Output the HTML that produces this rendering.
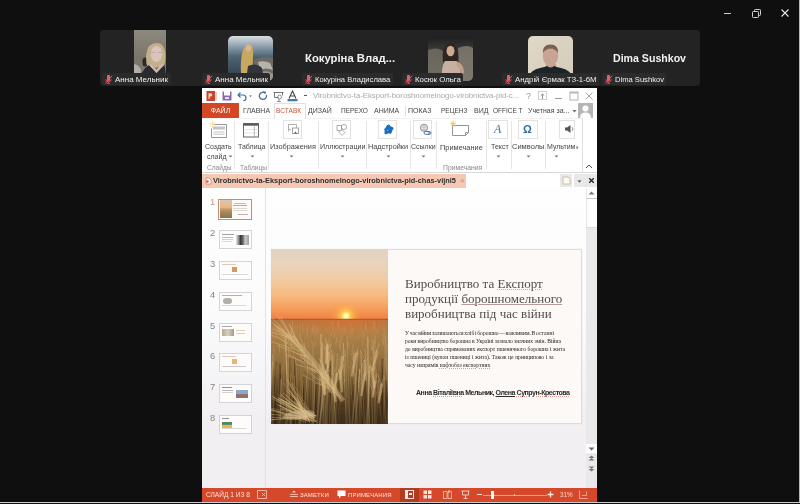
<!DOCTYPE html>
<html><head><meta charset="utf-8">
<style>
*{margin:0;padding:0;box-sizing:border-box}
html,body{width:800px;height:504px;overflow:hidden;background:#0f0f0f;font-family:"Liberation Sans",sans-serif}
.a{position:absolute}
div{will-change:transform}
#wc svg{position:absolute}
#bar{left:100px;top:30px;width:600px;height:56px;background:#232323;border-radius:4px}
.lbl{position:absolute;top:43px;height:12px;background:#2b2b2b;border-radius:2px;color:#f0f0f0;font-size:9px;line-height:12px;padding-left:13px;padding-right:2px;white-space:nowrap}
.mic{position:absolute;left:2px;top:2px;width:9px;height:9px}
.big{position:absolute;color:#f2f2f2;font-weight:bold;font-size:11.5px;white-space:nowrap}
.av{position:absolute;top:6px;width:45px;height:45px;border-radius:5px;overflow:hidden}
#ppt{left:202px;top:88px;width:395px;height:414px;background:#fff;overflow:hidden}
.t7{font-size:7px;color:#444;white-space:nowrap;position:absolute}
</style></head>
<body>
<!-- window controls -->
<div id="wc">
<svg class="a" style="left:720px;top:8px" width="14" height="12"><line x1="4" y1="5.5" x2="11" y2="5.5" stroke="#cfcfcf" stroke-width="1"/></svg>
<svg class="a" style="left:751px;top:8px" width="12" height="12"><rect x="1.5" y="3.5" width="6" height="6" rx=".8" fill="none" stroke="#d0d0d0"/><path d="M3.5 3.5V2.3a.8 .8 0 0 1 .8-.8h4.4a.8 .8 0 0 1 .8.8v4.4a.8 .8 0 0 1-.8.8H7.5" fill="none" stroke="#d0d0d0"/></svg>
<svg class="a" style="left:779px;top:7px" width="12" height="12"><path d="M2.5 2.5l7 7M9.5 2.5l-7 7" stroke="#e6e6e6" stroke-width="1.1"/></svg>
</div>
<div class="a" style="left:799px;top:0;width:1px;height:503px;background:#b4b6b8"></div>
<div class="a" style="left:0;top:502px;width:800px;height:1px;background:#c8ccd2"></div>

<!-- participants bar -->
<div id="bar" class="a"></div>

<div class="a" style="left:100px;top:30px;width:600px;height:56px">
 <!-- tile1 video -->
 <svg class="a" style="left:34px;top:0" width="32" height="55" viewBox="0 0 32 55">
  <defs><linearGradient id="v1" x1="0" y1="0" x2="0" y2="1"><stop offset="0" stop-color="#8e897f"/><stop offset=".5" stop-color="#7a746a"/><stop offset="1" stop-color="#85807a"/></linearGradient></defs>
  <rect width="32" height="55" fill="url(#v1)"/>
  <path d="M0 34 Q5 35 7 40 L5 55 H0z" fill="#c4c0b8" opacity=".75"/>
  <ellipse cx="11" cy="32" rx="2.6" ry="4.5" fill="#2e2a2a"/>
  <path d="M12.5 34 Q11 22 15 16 Q21 11 27 14 Q32 18 31.5 27 Q31.5 34 29 37 L15 38z" fill="#c2b08c"/>
  <ellipse cx="22.5" cy="24" rx="5.8" ry="8" fill="#d9c3bb"/>
  <path d="M16.5 22.5h4.5M24 22.5h4.5" stroke="#a89c9c" stroke-width=".6"/>
  <path d="M5 55 Q6 40 15 35 L22.5 43 L30 35 Q32 37 32 55z" fill="#2a2a30"/>
  <path d="M15 35 L22.5 43 L30 35 L27.5 34 L22.5 40 L17.5 34z" fill="#cfb8aa"/>
 </svg>
 <!-- tile2 avatar -->
 <svg class="a" style="left:128px;top:6px" width="45" height="45" viewBox="0 0 45 45">
  <defs><linearGradient id="v2" x1="0" y1="0" x2="0" y2="1"><stop offset="0" stop-color="#d8dee2"/><stop offset=".2" stop-color="#98a8b4"/><stop offset=".45" stop-color="#4e6676"/><stop offset="1" stop-color="#2a3844"/></linearGradient><clipPath id="c2"><rect width="45" height="45" rx="5"/></clipPath></defs>
  <g clip-path="url(#c2)">
  <rect width="45" height="45" fill="url(#v2)"/>
  <path d="M26 24 Q34 20 45 22 V45 H24z" fill="#6e6a64"/>
  <path d="M30 26 Q36 24 42 27 L45 34 Q38 31 32 34z" fill="#b8b4ac"/>
  <path d="M34 36 Q40 34 45 38 V45 H34z" fill="#9a968e"/>
  <path d="M13 38 Q12 24 15 14 Q18 7 22 8 Q26 10 25 20 Q25 30 24 38z" fill="#c8a860"/>
  <ellipse cx="20.5" cy="12" rx="2.6" ry="3.4" fill="#d8b890"/>
  <path d="M20 30 Q28 26 34 32 L36 45 H18z" fill="#30343c"/>
  <path d="M5 45 Q10 38 20 38 L24 45z" fill="#3e4046"/>
  </g>
 </svg>
 <!-- tile3 big name -->
 <div class="big" style="left:204.5px;top:22px;font-size:11.3px">Кокуріна Влад...</div>
 <!-- tile4 avatar -->
 <svg class="a" style="left:328px;top:6px" width="45" height="45" viewBox="0 0 45 45">
  <defs><linearGradient id="v4" x1="0" y1="0" x2="0" y2="1"><stop offset="0" stop-color="#1c1e1e"/><stop offset=".3" stop-color="#3a3a36"/><stop offset="1" stop-color="#5a564e"/></linearGradient><clipPath id="c4"><rect width="45" height="45" rx="5"/></clipPath></defs>
  <g clip-path="url(#c4)">
  <rect width="45" height="45" fill="url(#v4)"/>
  <path d="M0 14 Q10 10 16 16 L14 45 H0z" fill="#7e786c" opacity=".7"/>
  <path d="M30 12 Q40 8 45 12 V45 H32z" fill="#8a8478" opacity=".75"/>
  <path d="M15 26 Q13 10 22 7 Q31 8 30 24 L27 26z" fill="#2e2420"/>
  <ellipse cx="22.5" cy="15" rx="4" ry="5.2" fill="#d0aa90"/>
  <path d="M14 45 Q13 30 17 25 L28 25 Q33 28 33 45z" fill="#c8b0a0"/>
  <path d="M28 25 Q36 28 36 36 L34 40 Q32 32 29 30z" fill="#c4a088"/>
  </g>
 </svg>
 <!-- tile5 avatar -->
 <svg class="a" style="left:428px;top:6px" width="45" height="45" viewBox="0 0 45 45">
  <defs><linearGradient id="v5" x1="0" y1="0" x2="1" y2="1"><stop offset="0" stop-color="#e0d8c8"/><stop offset="1" stop-color="#d4ccba"/></linearGradient><clipPath id="c5"><rect width="45" height="45" rx="5"/></clipPath></defs>
  <g clip-path="url(#c5)">
  <rect width="45" height="45" fill="url(#v5)"/>
  <path d="M18 28 h10 v5 h-10z" fill="#c0a090"/>
  <ellipse cx="22.5" cy="19.5" rx="7.8" ry="10.5" fill="#c8a494"/>
  <path d="M14.8 17 Q14.5 8.5 22.5 8.5 Q30.5 8.5 30.2 17 Q27 12.5 22.5 12.5 Q18 12.5 14.8 17z" fill="#7a6050"/>
  <path d="M-1 45 Q1 34 12 32 Q17 31 19 30 Q22.5 33 26 30 Q28 31 33 32 Q44 34 46 45z" fill="#1e222a"/>
  </g>
 </svg>
 <!-- tile6 big name -->
 <div class="big" style="left:513px;top:22px;font-size:10.6px">Dima Sushkov</div>
</div>
<div class="lbl" style="left:102px;top:73px;width:69px"><svg class="mic" viewBox="0 0 9 9"><path d="M3 1.2a1.5 1.5 0 0 1 3 0v3.2a1.5 1.5 0 0 1-3 0z" fill="#e0606e"/><path d="M1.8 4.2a2.7 2.7 0 0 0 5.4 0M4.5 6.9v1.4M3 8.4h3" fill="none" stroke="#d8505e" stroke-width=".9"/><path d="M1.5 8.3L8 .8" stroke="#e86070" stroke-width="1"/></svg><span style="font-size:8px">Анна Мельник</span></div>
<div class="lbl" style="left:202px;top:73px;width:68px"><svg class="mic" viewBox="0 0 9 9"><path d="M3 1.2a1.5 1.5 0 0 1 3 0v3.2a1.5 1.5 0 0 1-3 0z" fill="#e0606e"/><path d="M1.8 4.2a2.7 2.7 0 0 0 5.4 0M4.5 6.9v1.4M3 8.4h3" fill="none" stroke="#d8505e" stroke-width=".9"/><path d="M1.5 8.3L8 .8" stroke="#e86070" stroke-width="1"/></svg><span style="font-size:8px">Анна Мельник</span></div>
<div class="lbl" style="left:302px;top:73px;width:91px"><svg class="mic" viewBox="0 0 9 9"><path d="M3 1.2a1.5 1.5 0 0 1 3 0v3.2a1.5 1.5 0 0 1-3 0z" fill="#e0606e"/><path d="M1.8 4.2a2.7 2.7 0 0 0 5.4 0M4.5 6.9v1.4M3 8.4h3" fill="none" stroke="#d8505e" stroke-width=".9"/><path d="M1.5 8.3L8 .8" stroke="#e86070" stroke-width="1"/></svg><span style="font-size:7.6px">Кокуріна Владислава</span></div>
<div class="lbl" style="left:402px;top:73px;width:61px"><svg class="mic" viewBox="0 0 9 9"><path d="M3 1.2a1.5 1.5 0 0 1 3 0v3.2a1.5 1.5 0 0 1-3 0z" fill="#e0606e"/><path d="M1.8 4.2a2.7 2.7 0 0 0 5.4 0M4.5 6.9v1.4M3 8.4h3" fill="none" stroke="#d8505e" stroke-width=".9"/><path d="M1.5 8.3L8 .8" stroke="#e86070" stroke-width="1"/></svg><span style="font-size:7.8px">Косюк Ольга</span></div>
<div class="lbl" style="left:502px;top:73px;width:97px"><svg class="mic" viewBox="0 0 9 9"><path d="M3 1.2a1.5 1.5 0 0 1 3 0v3.2a1.5 1.5 0 0 1-3 0z" fill="#e0606e"/><path d="M1.8 4.2a2.7 2.7 0 0 0 5.4 0M4.5 6.9v1.4M3 8.4h3" fill="none" stroke="#d8505e" stroke-width=".9"/><path d="M1.5 8.3L8 .8" stroke="#e86070" stroke-width="1"/></svg><span style="font-size:7.8px">Андрій Єрмак ТЗ-1-6М</span></div>
<div class="lbl" style="left:602px;top:73px;width:64px"><svg class="mic" viewBox="0 0 9 9"><path d="M3 1.2a1.5 1.5 0 0 1 3 0v3.2a1.5 1.5 0 0 1-3 0z" fill="#e0606e"/><path d="M1.8 4.2a2.7 2.7 0 0 0 5.4 0M4.5 6.9v1.4M3 8.4h3" fill="none" stroke="#d8505e" stroke-width=".9"/><path d="M1.5 8.3L8 .8" stroke="#e86070" stroke-width="1"/></svg><span style="font-size:7.6px">Dima Sushkov</span></div>


<!-- powerpoint -->
<div id="ppt" class="a">
 <!-- title bar -->
 <svg class="a" style="left:4px;top:3px" width="12" height="10" viewBox="0 0 12 10"><rect x="0.5" y="0" width="8.5" height="10" fill="#c9452a"/><rect x="9.5" y="1" width="1" height="8" fill="#b0a8a8"/><path d="M2.5 2.2h2.2a1.6 1.6 0 0 1 0 3.2H3.6V8H2.5z" fill="#f5e0c8"/></svg>
 <svg class="a" style="left:20px;top:3px" width="10" height="10" viewBox="0 0 10 10"><path d="M0.5 0.5h1.5v4h6v-4h1.5v9h-9z" fill="#8a6ab0"/><rect x="3" y="6" width="4" height="2" fill="#e8e0f0"/></svg>
 <svg class="a" style="left:35px;top:3px" width="16" height="10" viewBox="0 0 16 10"><path d="M3.5 1.5L1 4l2.5 2.5M1.2 4H6a3 3 0 0 1 0 6" fill="none" stroke="#3f6fa8" stroke-width="1.2"/><path d="M12 4.5h3l-1.5 1.5z" fill="#666"/></svg>
 <svg class="a" style="left:56px;top:3px" width="10" height="10" viewBox="0 0 10 10"><path d="M6.5 1.6A3.6 3.6 0 1 0 8.4 4" fill="none" stroke="#4a6a88" stroke-width="1.3"/><path d="M5 0.2l3.2.6-1 2.8z" fill="#4a6a88"/></svg>
 <svg class="a" style="left:71px;top:3px" width="11" height="11" viewBox="0 0 11 11"><path d="M0.5 1.5h10M1.5 1.5v5h4M9.5 1.5v3" fill="none" stroke="#666" stroke-width=".9"/><circle cx="6.5" cy="6" r="2" fill="none" stroke="#777" stroke-width=".8"/><path d="M4 10.5h4M6 8v2.5" stroke="#777" stroke-width=".8"/></svg>
 <svg class="a" style="left:85px;top:2px" width="11" height="12" viewBox="0 0 11 12"><path d="M2 8.5L5.5 1l3.5 7.5M3.5 6h4" fill="none" stroke="#444" stroke-width="1.1"/><rect x="0.5" y="9" width="10" height="2.3" fill="#4b78a8"/></svg>
 <div class="a" style="left:102px;top:7px;width:3px;height:1px;background:#555"></div>
 <div class="t7" style="left:111px;top:3px;font-size:7.75px;color:#a8a8a8;line-height:10px">Virobnictvo-ta-Eksport-boroshnomelnogo-virobnictva-pid-c...</div>
 <div class="t7" style="left:324px;top:2px;font-size:9px;color:#9a9a9a;line-height:12px">?</div>
 <svg class="a" style="left:336px;top:3px" width="10" height="10" viewBox="0 0 10 10"><rect x="0.5" y="0.5" width="8" height="8" fill="none" stroke="#c4c4c4" stroke-width=".8"/><path d="M4.5 8V3M2.8 4.6L4.5 3l1.7 1.6" fill="none" stroke="#8a8a8a" stroke-width=".9"/></svg>
 <div class="a" style="left:353px;top:10px;width:7px;height:1px;background:#9a9a9a"></div>
 <svg class="a" style="left:367px;top:3px" width="10" height="10" viewBox="0 0 10 10"><rect x="1" y="1" width="8" height="8" fill="none" stroke="#b4b4b4" stroke-width="1"/><rect x="1" y="1" width="8" height="1.5" fill="#b4b4b4"/></svg>
 <svg class="a" style="left:382px;top:3px" width="10" height="10" viewBox="0 0 10 10"><path d="M1.5 1.5l7 7M8.5 1.5l-7 7" stroke="#a4a4a4" stroke-width="1"/></svg>

 <!-- tabs -->
 <div class="a" style="left:0;top:15px;width:37px;height:15px;background:#d24726;color:#fff;font-size:7px;line-height:15px;text-align:center">ФАЙЛ</div>
 <div class="a" style="left:72px;top:15px;width:32px;height:16px;border:1px solid #e0e0e0;border-bottom:none;background:#fff;z-index:1"></div>
 <div class="t7" style="left:40.5px;top:19px;line-height:8px">ГЛАВНА</div>
 <div class="t7" style="left:74px;top:19px;line-height:8px;color:#c4583a;font-size:6.6px;z-index:2">ВСТАВК</div>
 <div class="t7" style="left:106px;top:19px;line-height:8px">ДИЗАЙ</div>
 <div class="t7" style="left:139px;top:19px;line-height:8px;font-size:6.5px">ПЕРЕХО</div>
 <div class="t7" style="left:171.5px;top:19px;line-height:8px">АНИМА</div>
 <div class="a" style="left:203px;top:18px;width:1px;height:10px;background:#e0e0e0"></div>
 <div class="t7" style="left:206px;top:19px;line-height:8px">ПОКАЗ</div>
 <div class="t7" style="left:239px;top:19px;line-height:8px;font-size:6.5px">РЕЦЕНЗ</div>
 <div class="t7" style="left:272px;top:19px;line-height:8px">ВИД</div>
 <div class="t7" style="left:291px;top:19px;line-height:8px;font-size:6.5px">OFFICE T</div>
 <div class="t7" style="left:326px;top:19px;line-height:8px">Учетная за...</div>
 <svg class="a" style="left:370px;top:21px" width="5" height="4"><path d="M0.5 1h4L2.5 3.5z" fill="#666"/></svg>
 <svg class="a" style="left:376px;top:15px" width="15" height="15" viewBox="0 0 15 15"><rect width="15" height="15" fill="#b5b5b5"/><circle cx="7.5" cy="5.5" r="3" fill="#fff"/><path d="M2 15 Q2 9.5 7.5 9.5 Q13 9.5 13 15z" fill="#fff"/></svg>

 <!-- ribbon -->
 <div class="a" style="left:0;top:30px;width:380px;height:1px;background:#f2f2f2"></div>
 <div class="a" style="left:0;top:84px;width:395px;height:1px;background:#d8d8d8"></div>
 <svg class="a" style="left:5.5px;top:31px" width="20" height="19" viewBox="0 0 20 19"><path d="M6 5.5h12.5v13h-15v-9" fill="#fff" stroke="#8a8a8a" stroke-width=".9"/><rect x="5" y="7.5" width="12" height="3" fill="#c4c4c4"/><path d="M5.5 13h11M5.5 15.2h11" stroke="#9a9a9a" stroke-width=".6"/><path d="M4.5 1v8M0.5 5h8M1.7 2.2l5.6 5.6M7.3 2.2l-5.6 5.6" stroke="#f2d890" stroke-width=".6"/></svg><div class="t7" style="left:3px;top:55px;font-size:7px;color:#444;line-height:8px">Создать</div><div class="t7" style="left:4.5px;top:65px;font-size:7px;color:#444;line-height:8px">слайд</div><svg class="a" style="left:25.5px;top:67px" width="5" height="3"><path d="M0.5 0.5h4L2.5 2.5z" fill="#777"/></svg><div class="t7" style="left:5px;top:76px;font-size:6.6px;color:#8a8a8a;line-height:8px">Слайды</div><div class="a" style="left:32px;top:33px;width:1px;height:48px;background:#e6e6e6"></div><svg class="a" style="left:38px;top:34px" width="19" height="16" viewBox="0 0 19 16"><rect x="3.5" y="1.5" width="15" height="13.5" fill="#fff" stroke="#666" stroke-width="1"/><rect x="3.5" y="1.5" width="15" height="2.2" fill="#5a5a5a"/><path d="M3.5 7.5h15M3.5 11h15" stroke="#d4d4d4" stroke-width=".6"/><path d="M14.3 3.7v11.3" stroke="#8a8a8a" stroke-width=".6"/></svg><div class="t7" style="left:36px;top:55px;font-size:7px;color:#444;line-height:8px">Таблица</div><svg class="a" style="left:47.5px;top:67px" width="5" height="3"><path d="M0.5 0.5h4L2.5 2.5z" fill="#777"/></svg><div class="t7" style="left:38px;top:76px;font-size:6.6px;color:#8a8a8a;line-height:8px">Таблицы</div><div class="a" style="left:66px;top:33px;width:1px;height:48px;background:#e6e6e6"></div><div class="a" style="left:81px;top:32px;width:19px;height:19px;border:1px solid #e2e2e2;background:#fff"></div><svg class="a" style="left:84px;top:34px" width="14" height="14" viewBox="0 0 14 14"><path d="M2.5 9.5v-7h8v3" fill="none" stroke="#9a9a9a" stroke-width=".8"/><rect x="6.5" y="6" width="6" height="5.5" fill="#fff" stroke="#8a8a8a" stroke-width=".8"/><circle cx="4" cy="7.5" r="1" fill="#b8c4d0"/><path d="M8 11.5l1.5-2 1.5 2z" fill="#555"/></svg><div class="t7" style="left:67.5px;top:55px;font-size:7.3px;color:#444;line-height:8px">Изображения</div><svg class="a" style="left:87px;top:67px" width="5" height="3"><path d="M0.5 0.5h4L2.5 2.5z" fill="#777"/></svg><div class="a" style="left:116px;top:33px;width:1px;height:48px;background:#e6e6e6"></div><div class="a" style="left:130px;top:32px;width:19px;height:19px;border:1px solid #e2e2e2;background:#fff"></div><svg class="a" style="left:134px;top:35px" width="12" height="13" viewBox="0 0 12 13"><path d="M1 2.5h4.5v5H1z" fill="none" stroke="#8a8a8a" stroke-width=".7"/><circle cx="8" cy="4" r="2.6" fill="none" stroke="#8a8a8a" stroke-width=".7"/><path d="M6 6.5l3 3-3 3-3-3z" fill="#fff" stroke="#8a8a8a" stroke-width=".7"/></svg><div class="t7" style="left:117.5px;top:55px;font-size:7.1px;color:#444;line-height:8px">Иллюстрации</div><svg class="a" style="left:137.5px;top:67px" width="5" height="3"><path d="M0.5 0.5h4L2.5 2.5z" fill="#777"/></svg><div class="a" style="left:164px;top:33px;width:1px;height:48px;background:#e6e6e6"></div><div class="a" style="left:176px;top:32px;width:19px;height:19px;border:1px solid #e2e2e2;background:#fff"></div><svg class="a" style="left:181px;top:36px" width="11" height="11" viewBox="0 0 11 11"><path d="M4 1.2a2 2 0 0 1 3.4 1.1L9.3 3a1.6 1.6 0 0 1 .2 3l-.8 2.4a1.8 1.8 0 0 1-2.6.9L3.6 10a1.5 1.5 0 0 1-2.2-1.6L1.7 6.7A1.7 1.7 0 0 1 2.3 4z" fill="#1a6ec0"/><circle cx="4.6" cy="6.2" r=".6" fill="#9cc8f0"/></svg><div class="t7" style="left:166px;top:55px;font-size:7.3px;color:#444;line-height:8px">Надстройки</div><svg class="a" style="left:184px;top:67px" width="5" height="3"><path d="M0.5 0.5h4L2.5 2.5z" fill="#777"/></svg><div class="a" style="left:208px;top:33px;width:1px;height:48px;background:#e6e6e6"></div><div class="a" style="left:211px;top:32px;width:19px;height:19px;border:1px solid #e2e2e2;background:#fff"></div><svg class="a" style="left:217px;top:35px" width="13" height="13" viewBox="0 0 13 13"><circle cx="5" cy="4.8" r="3.6" fill="#fff" stroke="#666" stroke-width=".7"/><path d="M1.4 4.8h7.2M5 1.2v7.2M2 3h6M2 6.6h6" stroke="#8a8a8a" stroke-width=".5"/><path d="M6.5 8.5h2.5a1.4 1.4 0 0 1 0 2.8H6.5a1.4 1.4 0 0 1 0-2.8z M9 8.5h1.5a1.4 1.4 0 0 1 0 2.8H9" fill="none" stroke="#3a6a9a" stroke-width=".9"/></svg><div class="t7" style="left:208.5px;top:55px;font-size:7px;color:#444;line-height:8px">Ссылки</div><svg class="a" style="left:219px;top:67px" width="5" height="3"><path d="M0.5 0.5h4L2.5 2.5z" fill="#777"/></svg><div class="a" style="left:234px;top:33px;width:1px;height:48px;background:#e6e6e6"></div><svg class="a" style="left:247px;top:32px" width="22" height="17" viewBox="0 0 22 17"><path d="M3.5 5.5h16v7l-3 3h-13z" fill="#fff" stroke="#888" stroke-width=".9"/><path d="M16.5 15.5v-3h3" fill="none" stroke="#888" stroke-width=".8"/><path d="M4 0.5v6M1 3.5h6M1.8 1.3l4.4 4.4M6.2 1.3l-4.4 4.4" stroke="#f0c030" stroke-width=".7"/></svg><div class="t7" style="left:237.5px;top:56px;font-size:7.4px;color:#444;line-height:8px">Примечание</div><div class="t7" style="left:240.5px;top:76px;font-size:6.8px;color:#8a8a8a;line-height:8px">Примечания</div><div class="a" style="left:284px;top:33px;width:1px;height:48px;background:#e6e6e6"></div><div class="a" style="left:286px;top:32px;width:20px;height:19px;border:1px solid #e2e2e2;background:#fff"></div><div class="a" style="left:292px;top:34px;font-family:'Liberation Serif',serif;font-style:italic;font-size:12px;color:#2f6fb0;line-height:14px">A</div><div class="t7" style="left:289px;top:55px;font-size:7px;color:#444;line-height:8px">Текст</div><svg class="a" style="left:294px;top:67px" width="5" height="3"><path d="M0.5 0.5h4L2.5 2.5z" fill="#777"/></svg><div class="a" style="left:309px;top:33px;width:1px;height:48px;background:#e6e6e6"></div><div class="a" style="left:316px;top:32px;width:20px;height:19px;border:1px solid #e2e2e2;background:#fff"></div><div class="a" style="left:321px;top:34px;font-size:11px;font-weight:bold;color:#2f6fb0;line-height:14px">Ω</div><div class="t7" style="left:310px;top:55px;font-size:7.5px;color:#444;line-height:8px">Символы</div><svg class="a" style="left:323.5px;top:67px" width="5" height="3"><path d="M0.5 0.5h4L2.5 2.5z" fill="#777"/></svg><div class="a" style="left:343px;top:33px;width:1px;height:48px;background:#e6e6e6"></div><div class="a" style="left:357px;top:32px;width:16px;height:19px;border:1px solid #e2e2e2;background:#fff"></div><svg class="a" style="left:362px;top:36px" width="10" height="10" viewBox="0 0 10 10"><path d="M1 3.5h2L6.5 1v8L3 6.5H1z" fill="#555"/><path d="M7.8 3a2.5 2.5 0 0 1 0 4" fill="none" stroke="#777" stroke-width=".8"/></svg><div class="t7" style="left:345px;top:55px;font-size:7px;color:#444;line-height:8px">Мультим</div><svg class="a" style="left:374px;top:57px" width="3" height="5"><path d="M0.5 0.5v4l2-2z" fill="#777"/></svg><svg class="a" style="left:352px;top:67px" width="5" height="3"><path d="M0.5 0.5h4L2.5 2.5z" fill="#777"/></svg><div class="a" style="left:380px;top:30px;width:1px;height:54px;background:#e0e0e0"></div><svg class="a" style="left:383px;top:76px" width="8" height="5"><path d="M1 4l3-3 3 3" fill="none" stroke="#555" stroke-width="1"/></svg>

 <!-- doc tab bar -->
 <div class="a" style="left:0;top:86px;width:264px;height:14px;background:#f6c8b4"></div>
 <svg class="a" style="left:3px;top:89px" width="7" height="8" viewBox="0 0 7 8"><path d="M1 1h3l2 2v4H1z" fill="#fff" stroke="#c07060" stroke-width=".7"/><circle cx="2.5" cy="4.5" r="1.2" fill="#d05030"/></svg>
 <div class="t7" style="left:11px;top:88px;font-size:7.4px;font-weight:bold;color:#2e2e2e;line-height:10px">Virobnictvo-ta-Eksport-boroshnomelnogo-virobnictva-pid-chas-vijni5</div>
 <div class="t7" style="left:257.5px;top:88px;font-size:8px;color:#b89080;line-height:10px">×</div>
 <div class="a" style="left:358px;top:86px;width:12px;height:13px;background:#e8e8e8"></div>
 <svg class="a" style="left:360px;top:88px" width="9" height="9" viewBox="0 0 9 9"><path d="M1 1h5l2 2v5H1z" fill="#fffbe8" stroke="#b8b090" stroke-width=".7"/></svg>
 <div class="a" style="left:372px;top:86px;width:11px;height:13px;background:#e8e8e8"></div>
 <svg class="a" style="left:375px;top:92px" width="5" height="3"><path d="M0.5 0.5h4L2.5 2.5z" fill="#444"/></svg>
 <div class="a" style="left:383px;top:86px;width:12px;height:13px;background:#e8e8e8"></div>
 <svg class="a" style="left:386px;top:89px" width="7" height="7" viewBox="0 0 7 7"><path d="M1.2 1.2l4.6 4.6M5.8 1.2l-4.6 4.6" stroke="#222" stroke-width="1.3"/></svg>

 <!-- main -->
 <div class="a" style="left:0;top:100px;width:384px;height:300px;background:linear-gradient(#fefefe,#fbfbfc 40%,#f1eff2 78%)"></div>
 <div class="a" style="left:63px;top:100px;width:1px;height:300px;background:#e2e2e4"></div>
<!--THUMBS-->
<div class="a" style="left:8px;top:108.7px;font-size:9.3px;line-height:11px;color:#c29484">1</div><div class="a" style="left:16px;top:110.5px;width:34px;height:20.5px;border:1.5px solid #c98a72;background:#fdfaf8"></div><div class="a" style="left:8px;top:140.2px;font-size:9.3px;line-height:11px;color:#858585">2</div><div class="a" style="left:17px;top:142px;width:33px;height:19px;border:1px solid #d4d4d6;background:#fdfcfb"></div><div class="a" style="left:8px;top:171.2px;font-size:9.3px;line-height:11px;color:#858585">3</div><div class="a" style="left:17px;top:173px;width:33px;height:19px;border:1px solid #d4d4d6;background:#fdfcfb"></div><div class="a" style="left:8px;top:202.2px;font-size:9.3px;line-height:11px;color:#858585">4</div><div class="a" style="left:17px;top:204px;width:33px;height:19px;border:1px solid #d4d4d6;background:#fdfcfb"></div><div class="a" style="left:8px;top:232.7px;font-size:9.3px;line-height:11px;color:#858585">5</div><div class="a" style="left:17px;top:234.5px;width:33px;height:19px;border:1px solid #d4d4d6;background:#fdfcfb"></div><div class="a" style="left:8px;top:263.2px;font-size:9.3px;line-height:11px;color:#858585">6</div><div class="a" style="left:17px;top:265px;width:33px;height:19px;border:1px solid #d4d4d6;background:#fdfcfb"></div><div class="a" style="left:8px;top:294.2px;font-size:9.3px;line-height:11px;color:#858585">7</div><div class="a" style="left:17px;top:296px;width:33px;height:19px;border:1px solid #d4d4d6;background:#fdfcfb"></div><div class="a" style="left:8px;top:325.2px;font-size:9.3px;line-height:11px;color:#858585">8</div><div class="a" style="left:17px;top:327px;width:33px;height:19px;border:1px solid #d4d4d6;background:#fdfcfb"></div><div class="a" style="left:17.5px;top:112.0px;width:11.5px;height:17.5px;background:linear-gradient(#dcc4ac,#eab888 40%,#c09868 52%,#a08858 70%,#8a7450)"></div><div class="a" style="left:32px;top:115.0px;width:12px;height:0.8px;background:#c8b8b0"></div><div class="a" style="left:31px;top:117.0px;width:14px;height:1px;background:#b8a8a0"></div><div class="a" style="left:31px;top:120.0px;width:14px;height:0.7px;background:#e0d8d4"></div><div class="a" style="left:31px;top:122.0px;width:14px;height:0.7px;background:#e0d8d4"></div><div class="a" style="left:36px;top:126.0px;width:10px;height:0.8px;background:#c8b0a8"></div><div class="a" style="left:20px;top:145.5px;width:12px;height:0.9px;background:#a0a0a0"></div><div class="a" style="left:20px;top:148.5px;width:11px;height:0.8px;background:#b8b8b8"></div><div class="a" style="left:20px;top:150.5px;width:11px;height:0.7px;background:#d0d0d0"></div><div class="a" style="left:20px;top:152.5px;width:10px;height:0.7px;background:#d8d8d8"></div><div class="a" style="left:33.5px;top:147px;width:13px;height:9.5px;background:linear-gradient(90deg,#e8e8e8,#909090 20%,#383838 35%,#707070 55%,#c8c8c8 70%,#a0a0a0)"></div><div class="a" style="left:20px;top:176px;width:14px;height:0.8px;background:#e0c8b8"></div><div class="a" style="left:29.5px;top:178.5px;width:5px;height:5px;background:#d89858"></div><div class="a" style="left:20px;top:185.5px;width:26px;height:1.2px;background:#d8d8d8"></div><div class="a" style="left:20px;top:207px;width:20px;height:0.8px;background:#b0b0b0"></div><div class="a" style="left:20.5px;top:210px;width:9px;height:5.5px;border-radius:3px;background:#b0b0a8"></div><div class="a" style="left:20px;top:217px;width:24px;height:0.7px;background:#d8d8d8"></div><div class="a" style="left:20px;top:237.5px;width:10px;height:0.8px;background:#a8a8a8"></div><div class="a" style="left:20px;top:241.0px;width:12px;height:7px;background:linear-gradient(90deg,#b8a898,#d8d0c0,#a89888)"></div><div class="a" style="left:34px;top:241.5px;width:9px;height:1px;background:#e0d0b8"></div><div class="a" style="left:34px;top:244.5px;width:9px;height:0.8px;background:#e0d0b8"></div><div class="a" style="left:20px;top:268px;width:14px;height:0.8px;background:#e0c8b8"></div><div class="a" style="left:29.5px;top:270.5px;width:5px;height:5px;background:#e8b470"></div><div class="a" style="left:20px;top:278px;width:24px;height:0.8px;background:#d0c8c8"></div><div class="a" style="left:20px;top:299px;width:10px;height:0.8px;background:#909090"></div><div class="a" style="left:20px;top:302px;width:11px;height:0.8px;background:#b8b8b8"></div><div class="a" style="left:20px;top:304px;width:11px;height:0.7px;background:#d0d0d0"></div><div class="a" style="left:34px;top:301.5px;width:12px;height:8px;background:linear-gradient(#8aa8c8 45%,#a86050 60%,#708090)"></div><div class="a" style="left:20px;top:330px;width:7px;height:0.8px;background:#909090"></div><div class="a" style="left:20px;top:333.5px;width:10px;height:5.5px;background:linear-gradient(#4a8a6a 40%,#e8b848 50%)"></div><div class="a" style="left:20px;top:340px;width:24px;height:0.7px;background:#d8d8d8"></div>
<!--/THUMBS-->
 <div class="a" style="left:69px;top:161px;width:311px;height:175px;background:#fcf9f7;border:1px solid #dcdcdc;box-shadow:0 0 1px rgba(0,0,0,.1)"></div>
<svg class="a" style="left:69px;top:161px" width="117" height="175" viewBox="0 0 117 175">
  <defs>
   <linearGradient id="sky" x1="0" y1="0" x2="0" y2="1"><stop offset="0" stop-color="#e3d1c2"/><stop offset=".2" stop-color="#e8d4bc"/><stop offset=".45" stop-color="#f2caa0"/><stop offset=".65" stop-color="#f8ba80"/><stop offset=".85" stop-color="#f49c5a"/><stop offset="1" stop-color="#f07c40"/></linearGradient>
   <linearGradient id="fld" x1="0" y1="0" x2="0" y2="1"><stop offset="0" stop-color="#b07440"/><stop offset=".1" stop-color="#b4844c"/><stop offset=".3" stop-color="#9c7844"/><stop offset=".6" stop-color="#7e5e34"/><stop offset="1" stop-color="#4e3a20"/></linearGradient>
   <radialGradient id="sun"><stop offset="0" stop-color="#fffff0"/><stop offset=".14" stop-color="#fff4a0"/><stop offset=".3" stop-color="#ffd050" stop-opacity=".85"/><stop offset=".6" stop-color="#fcb048" stop-opacity=".45"/><stop offset="1" stop-color="#f8a040" stop-opacity="0"/></radialGradient>
   <radialGradient id="glow" cx=".64" cy="0" r=".6"><stop offset="0" stop-color="#e07030" stop-opacity=".7"/><stop offset="1" stop-color="#e07030" stop-opacity="0"/></radialGradient>
   <linearGradient id="dk" x1="0" y1="0" x2="0" y2="1"><stop offset="0" stop-color="#2e2010" stop-opacity="0"/><stop offset="1" stop-color="#2e2010" stop-opacity=".55"/></linearGradient>
   <filter id="bl" x="-5%" y="-5%" width="110%" height="110%"><feGaussianBlur stdDeviation=".5"/></filter>
  </defs>
  <rect width="117" height="71" fill="url(#sky)"/>
  <circle cx="75" cy="67" r="16" fill="url(#sun)"/>
  <rect y="70" width="117" height="105" fill="url(#fld)"/>
  <rect y="70" width="117" height="30" fill="url(#glow)"/>
  <rect y="69.7" width="117" height="1.2" fill="#6a4028" opacity=".4"/>
  <g filter="url(#bl)">
<rect x="27.8" y="84.1" width=".8" height="5.6" fill="#c49460" opacity=".45"/><rect x="55.5" y="84.9" width=".8" height="7.2" fill="#a06c38" opacity=".45"/><rect x="30.3" y="76.6" width=".8" height="10.0" fill="#a06c38" opacity=".45"/><rect x="63.3" y="84.2" width=".8" height="5.8" fill="#d0a068" opacity=".45"/><rect x="27.1" y="74.6" width=".8" height="9.5" fill="#a06c38" opacity=".45"/><rect x="86.7" y="87.1" width=".8" height="3.4" fill="#c49460" opacity=".45"/><rect x="5.0" y="89.7" width=".8" height="8.8" fill="#a06c38" opacity=".45"/><rect x="55.3" y="88.3" width=".8" height="9.2" fill="#c49460" opacity=".45"/><rect x="92.2" y="81.2" width=".8" height="8.1" fill="#c49460" opacity=".45"/><rect x="52.0" y="93.5" width=".8" height="9.2" fill="#d0a068" opacity=".45"/><rect x="4.2" y="82.9" width=".8" height="4.8" fill="#c49460" opacity=".45"/><rect x="51.0" y="86.0" width=".8" height="5.1" fill="#c49460" opacity=".45"/><rect x="97.5" y="84.8" width=".8" height="6.7" fill="#a06c38" opacity=".45"/><rect x="68.4" y="92.7" width=".8" height="7.8" fill="#d0a068" opacity=".45"/><rect x="100.2" y="94.8" width=".8" height="7.7" fill="#d0a068" opacity=".45"/><rect x="81.7" y="78.8" width=".8" height="6.8" fill="#c49460" opacity=".45"/><rect x="66.6" y="88.1" width=".8" height="4.5" fill="#c49460" opacity=".45"/><rect x="31.2" y="74.0" width=".8" height="6.4" fill="#c49460" opacity=".45"/><rect x="115.8" y="73.1" width=".8" height="8.6" fill="#a06c38" opacity=".45"/><rect x="105.0" y="71.5" width=".8" height="6.0" fill="#a06c38" opacity=".45"/><rect x="102.1" y="72.1" width=".8" height="7.3" fill="#d0a068" opacity=".45"/><rect x="44.2" y="85.1" width=".8" height="6.9" fill="#a06c38" opacity=".45"/><rect x="59.1" y="95.0" width=".8" height="5.2" fill="#d0a068" opacity=".45"/><rect x="12.6" y="83.9" width=".8" height="9.6" fill="#a06c38" opacity=".45"/><rect x="34.1" y="77.3" width=".8" height="7.8" fill="#a06c38" opacity=".45"/><rect x="36.7" y="94.0" width=".8" height="9.3" fill="#a06c38" opacity=".45"/><rect x="44.1" y="91.9" width=".8" height="5.7" fill="#c49460" opacity=".45"/><rect x="79.7" y="73.5" width=".8" height="9.8" fill="#c49460" opacity=".45"/><rect x="31.7" y="86.2" width=".8" height="8.0" fill="#a06c38" opacity=".45"/><rect x="51.2" y="77.2" width=".8" height="5.1" fill="#a06c38" opacity=".45"/><rect x="1.3" y="81.0" width=".8" height="7.1" fill="#d0a068" opacity=".45"/><rect x="44.1" y="85.1" width=".8" height="3.9" fill="#c49460" opacity=".45"/><rect x="73.4" y="82.2" width=".8" height="7.8" fill="#a06c38" opacity=".45"/><rect x="71.2" y="77.7" width=".8" height="6.4" fill="#c49460" opacity=".45"/><rect x="7.1" y="87.2" width=".8" height="9.7" fill="#a06c38" opacity=".45"/><rect x="73.5" y="78.2" width=".8" height="7.2" fill="#d0a068" opacity=".45"/><rect x="42.6" y="78.5" width=".8" height="5.6" fill="#c49460" opacity=".45"/><rect x="30.9" y="89.9" width=".8" height="3.7" fill="#d0a068" opacity=".45"/><rect x="113.7" y="87.4" width=".8" height="3.9" fill="#c49460" opacity=".45"/><rect x="26.0" y="90.3" width=".8" height="4.7" fill="#d0a068" opacity=".45"/><rect x="79.3" y="86.6" width=".8" height="3.7" fill="#c49460" opacity=".45"/><rect x="37.7" y="79.0" width=".8" height="8.8" fill="#a06c38" opacity=".45"/><rect x="94.7" y="94.1" width=".8" height="3.6" fill="#c49460" opacity=".45"/><rect x="76.1" y="92.2" width=".8" height="6.2" fill="#d0a068" opacity=".45"/><rect x="92.1" y="71.8" width=".8" height="9.7" fill="#a06c38" opacity=".45"/><rect x="94.4" y="91.1" width=".8" height="4.3" fill="#a06c38" opacity=".45"/><rect x="39.8" y="90.9" width=".8" height="3.6" fill="#c49460" opacity=".45"/><rect x="40.4" y="74.1" width=".8" height="5.0" fill="#a06c38" opacity=".45"/><rect x="54.4" y="86.2" width=".8" height="5.0" fill="#c49460" opacity=".45"/><rect x="47.9" y="93.1" width=".8" height="4.1" fill="#d0a068" opacity=".45"/><rect x="55.9" y="91.0" width=".8" height="7.4" fill="#c49460" opacity=".45"/><rect x="50.8" y="93.8" width=".8" height="9.5" fill="#d0a068" opacity=".45"/><rect x="3.8" y="82.0" width=".8" height="8.3" fill="#c49460" opacity=".45"/><rect x="60.7" y="77.9" width=".8" height="5.4" fill="#d0a068" opacity=".45"/><rect x="100.8" y="91.6" width=".8" height="9.8" fill="#d0a068" opacity=".45"/><rect x="94.8" y="72.1" width=".8" height="9.3" fill="#c49460" opacity=".45"/><rect x="59.9" y="75.8" width=".8" height="9.2" fill="#a06c38" opacity=".45"/><rect x="67.5" y="71.3" width=".8" height="8.2" fill="#d0a068" opacity=".45"/><rect x="58.9" y="76.7" width=".8" height="3.1" fill="#c49460" opacity=".45"/><rect x="48.4" y="93.5" width=".8" height="7.3" fill="#a06c38" opacity=".45"/><rect x="14.7" y="94.3" width=".8" height="6.8" fill="#d0a068" opacity=".45"/><rect x="41.2" y="75.7" width=".8" height="6.7" fill="#d0a068" opacity=".45"/><rect x="20.0" y="90.0" width=".8" height="9.5" fill="#d0a068" opacity=".45"/><rect x="96.3" y="71.2" width=".8" height="7.4" fill="#a06c38" opacity=".45"/><rect x="5.8" y="77.5" width=".8" height="4.9" fill="#c49460" opacity=".45"/><rect x="60.8" y="72.2" width=".8" height="5.3" fill="#d0a068" opacity=".45"/><rect x="100.3" y="89.6" width=".8" height="3.3" fill="#d0a068" opacity=".45"/><rect x="8.0" y="94.4" width=".8" height="9.0" fill="#d0a068" opacity=".45"/><rect x="60.3" y="82.8" width=".8" height="4.1" fill="#d0a068" opacity=".45"/><rect x="41.1" y="86.5" width=".8" height="7.1" fill="#a06c38" opacity=".45"/><rect x="31.0" y="94.7" width=".8" height="6.0" fill="#d0a068" opacity=".45"/><rect x="65.0" y="88.2" width=".8" height="5.7" fill="#d0a068" opacity=".45"/><rect x="66.3" y="72.0" width=".8" height="6.2" fill="#c49460" opacity=".45"/><rect x="91.6" y="80.1" width=".8" height="8.6" fill="#c49460" opacity=".45"/><rect x="103.7" y="72.3" width=".8" height="7.4" fill="#c49460" opacity=".45"/><rect x="36.8" y="93.8" width=".8" height="5.9" fill="#d0a068" opacity=".45"/><rect x="28.7" y="83.9" width=".8" height="7.9" fill="#d0a068" opacity=".45"/><rect x="94.0" y="76.4" width=".8" height="3.9" fill="#d0a068" opacity=".45"/><rect x="109.6" y="80.0" width=".8" height="9.3" fill="#a06c38" opacity=".45"/><rect x="14.2" y="87.6" width=".8" height="9.6" fill="#c49460" opacity=".45"/><rect x="77.5" y="92.3" width=".8" height="8.5" fill="#c49460" opacity=".45"/><rect x="12.7" y="78.6" width=".8" height="6.7" fill="#c49460" opacity=".45"/><rect x="83.8" y="82.4" width=".8" height="4.7" fill="#a06c38" opacity=".45"/><rect x="5.2" y="73.2" width=".8" height="3.7" fill="#a06c38" opacity=".45"/><rect x="21.0" y="71.6" width=".8" height="8.9" fill="#d0a068" opacity=".45"/><rect x="3.0" y="73.8" width=".8" height="6.4" fill="#c49460" opacity=".45"/><rect x="111.4" y="84.9" width=".8" height="8.6" fill="#d0a068" opacity=".45"/><rect x="116.6" y="84.5" width=".8" height="6.7" fill="#d0a068" opacity=".45"/><rect x="12.5" y="89.0" width=".8" height="9.5" fill="#d0a068" opacity=".45"/><rect x="64.4" y="91.9" width=".8" height="4.3" fill="#d0a068" opacity=".45"/><rect x="28.3" y="75.3" width=".8" height="4.7" fill="#c49460" opacity=".45"/><rect x="81.9" y="93.6" width=".8" height="4.8" fill="#c49460" opacity=".45"/><rect x="46.4" y="79.4" width=".8" height="5.9" fill="#d0a068" opacity=".45"/><rect x="43.9" y="76.6" width=".8" height="9.5" fill="#c49460" opacity=".45"/><rect x="113.1" y="81.0" width=".8" height="7.0" fill="#c49460" opacity=".45"/><rect x="78.8" y="83.4" width=".8" height="6.4" fill="#c49460" opacity=".45"/><rect x="46.9" y="92.3" width=".8" height="4.1" fill="#a06c38" opacity=".45"/><rect x="87.5" y="93.0" width=".8" height="6.6" fill="#a06c38" opacity=".45"/><rect x="68.6" y="91.6" width=".8" height="4.0" fill="#d0a068" opacity=".45"/><rect x="17.1" y="83.4" width=".8" height="9.5" fill="#c49460" opacity=".45"/><rect x="63.0" y="89.7" width=".8" height="7.7" fill="#a06c38" opacity=".45"/><rect x="69.6" y="85.0" width=".8" height="9.9" fill="#d0a068" opacity=".45"/><rect x="35.9" y="77.4" width=".8" height="8.6" fill="#d0a068" opacity=".45"/><rect x="20.2" y="79.7" width=".8" height="5.3" fill="#d0a068" opacity=".45"/><rect x="49.0" y="87.7" width=".8" height="7.9" fill="#d0a068" opacity=".45"/><rect x="54.8" y="91.0" width=".8" height="8.8" fill="#c49460" opacity=".45"/><rect x="3.2" y="94.8" width=".8" height="3.5" fill="#a06c38" opacity=".45"/><rect x="91.6" y="92.2" width=".8" height="3.3" fill="#d0a068" opacity=".45"/><rect x="104.2" y="86.6" width=".8" height="8.4" fill="#d0a068" opacity=".45"/><rect x="112.2" y="91.5" width=".8" height="4.7" fill="#d0a068" opacity=".45"/><rect x="90.8" y="133.0" width="1.0" height="42.0" fill="#3a2810" opacity="0.42"/><rect x="4.3" y="112.6" width="2.1" height="62.4" fill="#3a2810" opacity="0.26"/><rect x="21.4" y="141.0" width="0.9" height="34.0" fill="#3a2810" opacity="0.28"/><rect x="30.9" y="106.6" width="2.1" height="68.4" fill="#3a2810" opacity="0.36"/><rect x="85.9" y="106.3" width="1.3" height="68.7" fill="#3a2810" opacity="0.33"/><rect x="44.4" y="134.0" width="0.9" height="41.0" fill="#3a2810" opacity="0.44"/><rect x="57.3" y="119.3" width="1.0" height="55.7" fill="#3a2810" opacity="0.47"/><rect x="8.9" y="124.7" width="1.4" height="50.3" fill="#3a2810" opacity="0.38"/><rect x="29.4" y="136.5" width="1.5" height="38.5" fill="#3a2810" opacity="0.42"/><rect x="43.1" y="134.8" width="1.4" height="40.2" fill="#3a2810" opacity="0.42"/><rect x="110.5" y="109.8" width="1.9" height="65.2" fill="#3a2810" opacity="0.49"/><rect x="39.6" y="128.7" width="1.6" height="46.3" fill="#3a2810" opacity="0.42"/><rect x="59.5" y="118.2" width="0.9" height="56.8" fill="#3a2810" opacity="0.43"/><rect x="86.8" y="137.9" width="1.7" height="37.1" fill="#3a2810" opacity="0.29"/><rect x="43.4" y="125.4" width="2.1" height="49.6" fill="#3a2810" opacity="0.28"/><rect x="65.5" y="134.0" width="2.1" height="41.0" fill="#3a2810" opacity="0.41"/><rect x="49.2" y="113.4" width="1.2" height="61.6" fill="#3a2810" opacity="0.37"/><rect x="91.5" y="109.8" width="1.8" height="65.2" fill="#3a2810" opacity="0.30"/><rect x="64.8" y="122.6" width="1.6" height="52.4" fill="#3a2810" opacity="0.27"/><rect x="31.7" y="111.1" width="0.9" height="63.9" fill="#3a2810" opacity="0.37"/><rect x="31.7" y="128.2" width="1.8" height="46.8" fill="#3a2810" opacity="0.47"/><rect x="110.6" y="141.4" width="1.4" height="33.6" fill="#3a2810" opacity="0.27"/><rect x="58.3" y="111.8" width="2.2" height="63.2" fill="#3a2810" opacity="0.40"/><rect x="79.7" y="145.9" width="1.6" height="29.1" fill="#3a2810" opacity="0.28"/><rect x="81.7" y="135.2" width="1.6" height="39.8" fill="#3a2810" opacity="0.35"/><rect x="115.1" y="132.4" width="1.0" height="42.6" fill="#3a2810" opacity="0.46"/><rect x="93.4" y="112.7" width="1.6" height="62.3" fill="#3a2810" opacity="0.29"/><rect x="101.6" y="118.2" width="1.3" height="56.8" fill="#3a2810" opacity="0.46"/><rect x="52.0" y="141.7" width="1.4" height="33.3" fill="#3a2810" opacity="0.33"/><rect x="106.0" y="127.4" width="1.2" height="47.6" fill="#3a2810" opacity="0.38"/><rect x="82.7" y="135.0" width="2.1" height="40.0" fill="#3a2810" opacity="0.26"/><rect x="22.3" y="109.8" width="1.7" height="65.2" fill="#3a2810" opacity="0.44"/><rect x="27.4" y="133.1" width="1.0" height="41.9" fill="#3a2810" opacity="0.30"/><rect x="91.5" y="141.6" width="1.1" height="33.4" fill="#3a2810" opacity="0.48"/><rect x="110.8" y="117.7" width="1.0" height="57.3" fill="#3a2810" opacity="0.41"/><rect x="17.9" y="109.0" width="1.5" height="66.0" fill="#3a2810" opacity="0.48"/><rect x="3.0" y="127.8" width="1.7" height="47.2" fill="#3a2810" opacity="0.37"/><rect x="2.2" y="119.8" width="1.3" height="55.2" fill="#3a2810" opacity="0.34"/><rect x="81.1" y="142.8" width="0.9" height="32.2" fill="#3a2810" opacity="0.44"/><rect x="4.0" y="149.7" width="0.9" height="25.3" fill="#3a2810" opacity="0.50"/><rect x="24.0" y="114.0" width="0.9" height="61.0" fill="#3a2810" opacity="0.42"/><rect x="25.8" y="140.4" width="1.2" height="34.6" fill="#3a2810" opacity="0.35"/><rect x="98.9" y="122.6" width="1.8" height="52.4" fill="#3a2810" opacity="0.37"/><rect x="8.0" y="114.4" width="2.0" height="60.6" fill="#3a2810" opacity="0.37"/><rect x="2.7" y="136.1" width="1.4" height="38.9" fill="#3a2810" opacity="0.36"/><path d="M52.8 86.9 Q52.0 130.9 49.9 176" stroke="#98743e" stroke-width="1.0" fill="none" opacity="0.53"/><path d="M23.4 85.1 Q22.4 130.1 19.9 176" stroke="#a88450" stroke-width="1.3" fill="none" opacity="0.51"/><path d="M15.2 86.1 Q15.5 130.6 16.2 176" stroke="#e2c894" stroke-width="0.6" fill="none" opacity="0.53"/><path d="M51.2 94.2 Q52.5 134.6 55.3 176" stroke="#c8a46c" stroke-width="0.9" fill="none" opacity="0.56"/><path d="M1.5 105.2 Q1.1 140.1 0.3 176" stroke="#d4b47c" stroke-width="0.7" fill="none" opacity="0.47"/><path d="M19.2 101.6 Q17.8 138.3 14.6 176" stroke="#a88450" stroke-width="1.2" fill="none" opacity="0.44"/><path d="M119.6 132.1 Q120.7 153.5 123.1 176" stroke="#98743e" stroke-width="0.7" fill="none" opacity="0.43"/><path d="M98.5 116.5 Q97.9 145.7 96.6 176" stroke="#dcbc88" stroke-width="1.4" fill="none" opacity="0.53"/><path d="M-4.5 86.5 Q-6.0 130.8 -9.4 176" stroke="#e2c894" stroke-width="0.9" fill="none" opacity="0.41"/><path d="M59.7 101.6 Q61.2 138.3 64.5 176" stroke="#98743e" stroke-width="1.2" fill="none" opacity="0.63"/><path d="M114.4 86.7 Q113.7 130.9 112.0 176" stroke="#dcbc88" stroke-width="0.6" fill="none" opacity="0.44"/><path d="M102.9 90.7 Q102.5 132.9 101.6 176" stroke="#dcbc88" stroke-width="0.7" fill="none" opacity="0.57"/><path d="M88.2 126.8 Q88.4 150.9 88.9 176" stroke="#98743e" stroke-width="1.2" fill="none" opacity="0.48"/><path d="M51.4 120.1 Q50.9 147.6 49.6 176" stroke="#98743e" stroke-width="1.4" fill="none" opacity="0.36"/><path d="M16.8 122.6 Q18.0 148.8 20.7 176" stroke="#e2c894" stroke-width="0.8" fill="none" opacity="0.53"/><path d="M96.8 87.8 Q97.2 131.4 98.1 176" stroke="#dcbc88" stroke-width="1.3" fill="none" opacity="0.57"/><path d="M37.4 103.5 Q35.8 139.3 32.2 176" stroke="#e2c894" stroke-width="0.8" fill="none" opacity="0.44"/><path d="M52.2 126.1 Q51.1 150.5 48.7 176" stroke="#d4b47c" stroke-width="1.3" fill="none" opacity="0.39"/><path d="M120.1 90.6 Q119.4 132.8 117.6 176" stroke="#dcbc88" stroke-width="1.0" fill="none" opacity="0.62"/><path d="M35.5 129.1 Q36.5 152.1 38.9 176" stroke="#e2c894" stroke-width="0.5" fill="none" opacity="0.59"/><path d="M71.0 127.9 Q69.5 151.5 66.2 176" stroke="#98743e" stroke-width="0.6" fill="none" opacity="0.49"/><path d="M23.3 126.5 Q23.7 150.7 24.7 176" stroke="#c8a46c" stroke-width="0.9" fill="none" opacity="0.55"/><path d="M93.8 99.6 Q95.4 137.3 99.1 176" stroke="#dcbc88" stroke-width="0.7" fill="none" opacity="0.51"/><path d="M54.0 121.4 Q52.4 148.2 48.9 176" stroke="#dcbc88" stroke-width="1.2" fill="none" opacity="0.63"/><path d="M82.2 103.2 Q83.2 139.1 85.6 176" stroke="#d4b47c" stroke-width="0.7" fill="none" opacity="0.60"/><path d="M2.9 96.8 Q2.7 135.9 2.2 176" stroke="#c8a46c" stroke-width="0.6" fill="none" opacity="0.63"/><path d="M87.2 128.7 Q89.0 151.9 93.1 176" stroke="#dcbc88" stroke-width="0.8" fill="none" opacity="0.41"/><path d="M74.2 105.5 Q75.6 140.2 78.9 176" stroke="#98743e" stroke-width="1.4" fill="none" opacity="0.63"/><path d="M32.1 131.7 Q31.0 153.4 28.3 176" stroke="#d4b47c" stroke-width="0.8" fill="none" opacity="0.51"/><path d="M76.2 87.0 Q77.1 131.0 79.1 176" stroke="#dcbc88" stroke-width="0.5" fill="none" opacity="0.49"/><path d="M20.0 124.1 Q18.7 149.6 15.7 176" stroke="#dcbc88" stroke-width="0.9" fill="none" opacity="0.41"/><path d="M56.9 125.5 Q56.1 150.2 54.3 176" stroke="#c8a46c" stroke-width="1.3" fill="none" opacity="0.48"/><path d="M114.4 108.7 Q116.2 141.9 120.4 176" stroke="#c8a46c" stroke-width="0.8" fill="none" opacity="0.49"/><path d="M107.6 125.4 Q106.9 150.2 105.2 176" stroke="#e2c894" stroke-width="0.5" fill="none" opacity="0.54"/><path d="M13.9 86.0 Q15.6 130.5 19.3 176" stroke="#dcbc88" stroke-width="0.8" fill="none" opacity="0.64"/><path d="M41.1 112.6 Q41.0 143.8 41.0 176" stroke="#c8a46c" stroke-width="0.9" fill="none" opacity="0.45"/><path d="M1.5 112.3 Q0.0 143.7 -3.4 176" stroke="#d4b47c" stroke-width="1.1" fill="none" opacity="0.50"/><path d="M86.8 102.0 Q85.1 138.5 81.2 176" stroke="#d4b47c" stroke-width="1.3" fill="none" opacity="0.59"/><path d="M26.4 91.8 Q27.3 133.4 29.5 176" stroke="#98743e" stroke-width="1.0" fill="none" opacity="0.43"/><path d="M16.4 85.9 Q16.9 130.4 18.1 176" stroke="#98743e" stroke-width="0.9" fill="none" opacity="0.55"/><path d="M112.9 125.7 Q113.3 150.4 114.2 176" stroke="#d4b47c" stroke-width="0.8" fill="none" opacity="0.37"/><path d="M12.7 126.6 Q11.3 150.8 7.9 176" stroke="#98743e" stroke-width="0.9" fill="none" opacity="0.59"/><path d="M52.5 133.0 Q51.2 154.0 48.3 176" stroke="#e2c894" stroke-width="0.9" fill="none" opacity="0.61"/><path d="M100.1 131.6 Q100.5 153.3 101.5 176" stroke="#e2c894" stroke-width="0.9" fill="none" opacity="0.43"/><path d="M85.1 130.6 Q83.7 152.8 80.3 176" stroke="#c8a46c" stroke-width="0.5" fill="none" opacity="0.50"/><path d="M90.6 126.3 Q90.4 150.7 89.9 176" stroke="#c8a46c" stroke-width="0.7" fill="none" opacity="0.46"/><path d="M100.2 100.8 Q99.4 137.9 97.4 176" stroke="#98743e" stroke-width="0.8" fill="none" opacity="0.47"/><path d="M30.8 91.6 Q29.9 133.3 27.8 176" stroke="#a88450" stroke-width="0.9" fill="none" opacity="0.64"/><path d="M88.7 119.9 Q87.3 147.5 84.0 176" stroke="#e2c894" stroke-width="1.1" fill="none" opacity="0.60"/><path d="M-4.3 99.1 Q-2.7 137.1 1.2 176" stroke="#c8a46c" stroke-width="1.4" fill="none" opacity="0.49"/><path d="M31.8 113.0 Q30.6 144.0 27.8 176" stroke="#d4b47c" stroke-width="0.6" fill="none" opacity="0.62"/><path d="M17.6 134.6 Q18.2 154.8 19.7 176" stroke="#d4b47c" stroke-width="0.9" fill="none" opacity="0.40"/><path d="M74.6 100.5 Q75.1 137.8 76.4 176" stroke="#d4b47c" stroke-width="0.5" fill="none" opacity="0.64"/><path d="M62.9 104.1 Q61.5 139.6 58.2 176" stroke="#e2c894" stroke-width="0.8" fill="none" opacity="0.39"/><path d="M13.4 91.3 Q12.9 133.2 11.7 176" stroke="#a88450" stroke-width="1.3" fill="none" opacity="0.35"/><path d="M42.1 92.1 Q42.0 133.6 41.8 176" stroke="#dcbc88" stroke-width="0.6" fill="none" opacity="0.60"/><path d="M55.0 122.0 Q55.1 148.5 55.4 176" stroke="#98743e" stroke-width="1.0" fill="none" opacity="0.49"/><path d="M63.3 107.1 Q63.5 141.1 63.8 176" stroke="#a88450" stroke-width="1.2" fill="none" opacity="0.44"/><path d="M90.2 122.4 Q89.5 148.7 87.8 176" stroke="#a88450" stroke-width="0.8" fill="none" opacity="0.60"/><path d="M11.6 115.2 Q10.0 145.1 6.2 176" stroke="#d4b47c" stroke-width="0.6" fill="none" opacity="0.35"/><path d="M105.5 124.7 Q107.2 149.9 111.4 176" stroke="#c8a46c" stroke-width="0.6" fill="none" opacity="0.51"/><path d="M51.0 92.3 Q51.4 133.7 52.2 176" stroke="#c8a46c" stroke-width="1.1" fill="none" opacity="0.53"/><path d="M84.2 123.5 Q85.0 149.3 86.9 176" stroke="#c8a46c" stroke-width="0.8" fill="none" opacity="0.64"/><path d="M29.3 91.2 Q29.3 133.1 29.3 176" stroke="#98743e" stroke-width="1.2" fill="none" opacity="0.42"/><path d="M50.2 98.3 Q48.9 136.7 45.8 176" stroke="#d4b47c" stroke-width="1.4" fill="none" opacity="0.51"/><path d="M51.1 115.9 Q49.5 145.4 45.9 176" stroke="#c8a46c" stroke-width="0.6" fill="none" opacity="0.61"/><path d="M43.8 134.1 Q43.3 154.5 42.2 176" stroke="#dcbc88" stroke-width="1.3" fill="none" opacity="0.48"/><path d="M105.2 120.6 Q104.7 147.8 103.5 176" stroke="#c8a46c" stroke-width="0.9" fill="none" opacity="0.46"/><path d="M77.8 128.8 Q78.1 151.9 78.8 176" stroke="#d4b47c" stroke-width="0.5" fill="none" opacity="0.37"/><path d="M-5.0 129.3 Q-6.0 152.1 -8.5 176" stroke="#d4b47c" stroke-width="0.5" fill="none" opacity="0.51"/><path d="M112.0 111.7 Q112.9 143.4 114.9 176" stroke="#a88450" stroke-width="0.9" fill="none" opacity="0.55"/><path d="M10.3 129.0 Q9.9 152.0 8.9 176" stroke="#c8a46c" stroke-width="0.8" fill="none" opacity="0.41"/><path d="M99.6 114.9 Q98.1 145.0 94.6 176" stroke="#c8a46c" stroke-width="0.8" fill="none" opacity="0.50"/><path d="M120.2 108.6 Q118.9 141.8 115.9 176" stroke="#dcbc88" stroke-width="1.0" fill="none" opacity="0.63"/><path d="M32.8 99.3 Q33.3 137.2 34.5 176" stroke="#a88450" stroke-width="0.6" fill="none" opacity="0.61"/><path d="M89.7 101.1 Q91.0 138.0 93.9 176" stroke="#dcbc88" stroke-width="1.1" fill="none" opacity="0.38"/><path d="M78.8 117.2 Q80.2 146.1 83.4 176" stroke="#c8a46c" stroke-width="0.7" fill="none" opacity="0.47"/><path d="M6.2 117.1 Q4.5 146.0 0.6 176" stroke="#a88450" stroke-width="1.0" fill="none" opacity="0.38"/><path d="M24.5 108.4 Q25.8 141.7 28.8 176" stroke="#c8a46c" stroke-width="0.8" fill="none" opacity="0.49"/><path d="M117.0 96.3 Q117.3 135.7 117.9 176" stroke="#d4b47c" stroke-width="1.0" fill="none" opacity="0.46"/><path d="M60.8 100.7 Q62.1 137.9 65.1 176" stroke="#d4b47c" stroke-width="0.9" fill="none" opacity="0.57"/><path d="M103.9 116.5 Q103.9 145.7 103.9 176" stroke="#a88450" stroke-width="1.2" fill="none" opacity="0.63"/><path d="M10.2 130.7 Q9.8 152.8 9.0 176" stroke="#d4b47c" stroke-width="1.2" fill="none" opacity="0.45"/><path d="M26.4 129.0 Q27.0 152.0 28.5 176" stroke="#a88450" stroke-width="0.9" fill="none" opacity="0.47"/><path d="M17.6 97.5 Q16.7 136.3 14.7 176" stroke="#c8a46c" stroke-width="1.2" fill="none" opacity="0.41"/><path d="M33.6 93.6 Q32.4 134.3 29.6 176" stroke="#d4b47c" stroke-width="0.7" fill="none" opacity="0.55"/><path d="M72.4 93.8 Q73.3 134.4 75.4 176" stroke="#dcbc88" stroke-width="1.0" fill="none" opacity="0.54"/><path d="M51.2 87.8 Q52.2 131.4 54.6 176" stroke="#98743e" stroke-width="0.5" fill="none" opacity="0.40"/><path d="M61.0 106.0 Q61.0 140.5 60.9 176" stroke="#dcbc88" stroke-width="0.8" fill="none" opacity="0.65"/><path d="M56.4 93.9 Q57.1 134.5 59.0 176" stroke="#d4b47c" stroke-width="1.0" fill="none" opacity="0.38"/><path d="M62.1 127.5 Q62.0 151.3 61.8 176" stroke="#dcbc88" stroke-width="0.8" fill="none" opacity="0.36"/><path d="M39.1 116.7 Q39.6 145.9 40.6 176" stroke="#98743e" stroke-width="1.0" fill="none" opacity="0.55"/><path d="M31.6 101.2 Q31.3 138.1 30.6 176" stroke="#98743e" stroke-width="1.3" fill="none" opacity="0.48"/><path d="M65.9 123.2 Q65.7 149.1 65.0 176" stroke="#d4b47c" stroke-width="0.7" fill="none" opacity="0.56"/><path d="M66.4 104.3 Q65.0 139.6 61.8 176" stroke="#c8a46c" stroke-width="1.3" fill="none" opacity="0.50"/><path d="M63.7 108.3 Q65.2 141.6 68.6 176" stroke="#c8a46c" stroke-width="0.6" fill="none" opacity="0.37"/><path d="M56.2 95.1 Q56.3 135.0 56.3 176" stroke="#e2c894" stroke-width="1.0" fill="none" opacity="0.39"/><path d="M44.2 112.8 Q43.5 143.9 42.0 176" stroke="#dcbc88" stroke-width="0.7" fill="none" opacity="0.44"/><path d="M114.6 90.9 Q116.2 132.9 120.0 176" stroke="#dcbc88" stroke-width="0.6" fill="none" opacity="0.46"/><path d="M81.6 98.2 Q82.6 136.6 84.9 176" stroke="#a88450" stroke-width="0.7" fill="none" opacity="0.43"/><path d="M39.1 102.2 Q37.7 138.6 34.4 176" stroke="#a88450" stroke-width="1.2" fill="none" opacity="0.42"/><path d="M53.0 133.7 Q52.4 154.4 51.0 176" stroke="#a88450" stroke-width="0.5" fill="none" opacity="0.50"/><path d="M121.4 91.7 Q122.8 133.3 126.2 176" stroke="#dcbc88" stroke-width="1.0" fill="none" opacity="0.56"/><path d="M49.3 125.2 Q48.4 150.1 46.4 176" stroke="#dcbc88" stroke-width="0.6" fill="none" opacity="0.36"/><path d="M49.8 85.1 Q50.8 130.0 53.3 176" stroke="#d4b47c" stroke-width="1.3" fill="none" opacity="0.57"/><path d="M42.3 87.2 Q42.5 131.1 43.0 176" stroke="#98743e" stroke-width="0.7" fill="none" opacity="0.40"/><path d="M119.5 122.0 Q119.5 148.5 119.3 176" stroke="#a88450" stroke-width="0.6" fill="none" opacity="0.45"/><path d="M98.5 121.5 Q97.6 148.3 95.6 176" stroke="#e2c894" stroke-width="1.3" fill="none" opacity="0.39"/><path d="M-4.1 89.1 Q-3.1 132.1 -0.7 176" stroke="#dcbc88" stroke-width="1.0" fill="none" opacity="0.55"/><path d="M51.2 93.8 Q52.4 134.4 55.1 176" stroke="#dcbc88" stroke-width="0.7" fill="none" opacity="0.36"/><rect y="120" width="117" height="55" fill="url(#dk)"/><path d="M84.7 105.0 L81.1 126.5" stroke="#d8b880" stroke-width="2.6" stroke-linecap="round" opacity=".5"/><path d="M84.7 105.0 l-3.6 -8.3" stroke="#e0c490" stroke-width=".4" opacity=".5"/><path d="M84.7 105.0 l3.6 -8.7" stroke="#e0c490" stroke-width=".4" opacity=".5"/><path d="M84.1 108.6 l-3.3 -8.0" stroke="#e0c490" stroke-width=".4" opacity=".5"/><path d="M84.1 108.6 l2.4 -8.7" stroke="#e0c490" stroke-width=".4" opacity=".5"/><path d="M83.5 112.2 l-3.6 -8.1" stroke="#e0c490" stroke-width=".4" opacity=".5"/><path d="M83.5 112.2 l2.5 -8.5" stroke="#e0c490" stroke-width=".4" opacity=".5"/><path d="M82.9 115.8 l-2.2 -7.9" stroke="#e0c490" stroke-width=".4" opacity=".5"/><path d="M82.9 115.8 l3.1 -9.3" stroke="#e0c490" stroke-width=".4" opacity=".5"/><path d="M82.3 119.3 l-3.2 -7.7" stroke="#e0c490" stroke-width=".4" opacity=".5"/><path d="M82.3 119.3 l2.0 -6.2" stroke="#e0c490" stroke-width=".4" opacity=".5"/><path d="M81.7 122.9 l-2.7 -7.2" stroke="#e0c490" stroke-width=".4" opacity=".5"/><path d="M81.7 122.9 l3.1 -7.6" stroke="#e0c490" stroke-width=".4" opacity=".5"/><path d="M101.0 119.3 L102.9 137.8" stroke="#d8b880" stroke-width="2.6" stroke-linecap="round" opacity=".5"/><path d="M101.0 119.3 l-3.0 -8.6" stroke="#e0c490" stroke-width=".4" opacity=".5"/><path d="M101.0 119.3 l2.6 -6.4" stroke="#e0c490" stroke-width=".4" opacity=".5"/><path d="M101.4 122.4 l-3.6 -9.0" stroke="#e0c490" stroke-width=".4" opacity=".5"/><path d="M101.4 122.4 l2.2 -11.6" stroke="#e0c490" stroke-width=".4" opacity=".5"/><path d="M101.7 125.4 l-3.2 -9.7" stroke="#e0c490" stroke-width=".4" opacity=".5"/><path d="M101.7 125.4 l2.9 -6.8" stroke="#e0c490" stroke-width=".4" opacity=".5"/><path d="M102.0 128.5 l-4.0 -7.0" stroke="#e0c490" stroke-width=".4" opacity=".5"/><path d="M102.0 128.5 l2.7 -12.0" stroke="#e0c490" stroke-width=".4" opacity=".5"/><path d="M102.3 131.6 l-2.2 -9.0" stroke="#e0c490" stroke-width=".4" opacity=".5"/><path d="M102.3 131.6 l3.0 -7.5" stroke="#e0c490" stroke-width=".4" opacity=".5"/><path d="M102.6 134.7 l-3.8 -8.5" stroke="#e0c490" stroke-width=".4" opacity=".5"/><path d="M102.6 134.7 l2.0 -8.8" stroke="#e0c490" stroke-width=".4" opacity=".5"/><path d="M50.3 124.8 L53.8 145.2" stroke="#d8b880" stroke-width="2.6" stroke-linecap="round" opacity=".5"/><path d="M50.3 124.8 l-2.1 -10.1" stroke="#e0c490" stroke-width=".4" opacity=".5"/><path d="M50.3 124.8 l2.6 -8.8" stroke="#e0c490" stroke-width=".4" opacity=".5"/><path d="M50.9 128.2 l-2.6 -7.8" stroke="#e0c490" stroke-width=".4" opacity=".5"/><path d="M50.9 128.2 l2.3 -9.8" stroke="#e0c490" stroke-width=".4" opacity=".5"/><path d="M51.5 131.6 l-2.2 -11.8" stroke="#e0c490" stroke-width=".4" opacity=".5"/><path d="M51.5 131.6 l2.1 -11.8" stroke="#e0c490" stroke-width=".4" opacity=".5"/><path d="M52.1 135.0 l-2.4 -6.5" stroke="#e0c490" stroke-width=".4" opacity=".5"/><path d="M52.1 135.0 l3.5 -9.2" stroke="#e0c490" stroke-width=".4" opacity=".5"/><path d="M52.6 138.4 l-3.5 -9.1" stroke="#e0c490" stroke-width=".4" opacity=".5"/><path d="M52.6 138.4 l3.3 -6.5" stroke="#e0c490" stroke-width=".4" opacity=".5"/><path d="M53.2 141.8 l-3.3 -9.1" stroke="#e0c490" stroke-width=".4" opacity=".5"/><path d="M53.2 141.8 l3.9 -6.0" stroke="#e0c490" stroke-width=".4" opacity=".5"/><path d="M54.6 123.2 L53.9 144.4" stroke="#d8b880" stroke-width="2.6" stroke-linecap="round" opacity=".5"/><path d="M54.6 123.2 l-3.4 -9.4" stroke="#e0c490" stroke-width=".4" opacity=".5"/><path d="M54.6 123.2 l2.8 -8.8" stroke="#e0c490" stroke-width=".4" opacity=".5"/><path d="M54.5 126.7 l-3.2 -6.2" stroke="#e0c490" stroke-width=".4" opacity=".5"/><path d="M54.5 126.7 l2.6 -10.4" stroke="#e0c490" stroke-width=".4" opacity=".5"/><path d="M54.3 130.2 l-2.5 -8.8" stroke="#e0c490" stroke-width=".4" opacity=".5"/><path d="M54.3 130.2 l2.5 -8.1" stroke="#e0c490" stroke-width=".4" opacity=".5"/><path d="M54.2 133.8 l-3.3 -10.5" stroke="#e0c490" stroke-width=".4" opacity=".5"/><path d="M54.2 133.8 l3.9 -8.9" stroke="#e0c490" stroke-width=".4" opacity=".5"/><path d="M54.1 137.3 l-2.4 -8.0" stroke="#e0c490" stroke-width=".4" opacity=".5"/><path d="M54.1 137.3 l2.1 -7.4" stroke="#e0c490" stroke-width=".4" opacity=".5"/><path d="M54.0 140.9 l-3.2 -9.7" stroke="#e0c490" stroke-width=".4" opacity=".5"/><path d="M54.0 140.9 l2.5 -7.1" stroke="#e0c490" stroke-width=".4" opacity=".5"/><path d="M56.6 97.3 L54.8 114.2" stroke="#d8b880" stroke-width="2.6" stroke-linecap="round" opacity=".5"/><path d="M56.6 97.3 l-3.8 -9.4" stroke="#e0c490" stroke-width=".4" opacity=".5"/><path d="M56.6 97.3 l2.7 -8.6" stroke="#e0c490" stroke-width=".4" opacity=".5"/><path d="M56.3 100.1 l-2.1 -10.4" stroke="#e0c490" stroke-width=".4" opacity=".5"/><path d="M56.3 100.1 l3.5 -8.2" stroke="#e0c490" stroke-width=".4" opacity=".5"/><path d="M56.0 102.9 l-3.5 -7.6" stroke="#e0c490" stroke-width=".4" opacity=".5"/><path d="M56.0 102.9 l2.4 -7.4" stroke="#e0c490" stroke-width=".4" opacity=".5"/><path d="M55.7 105.8 l-2.4 -9.6" stroke="#e0c490" stroke-width=".4" opacity=".5"/><path d="M55.7 105.8 l3.3 -10.4" stroke="#e0c490" stroke-width=".4" opacity=".5"/><path d="M55.4 108.6 l-2.2 -10.6" stroke="#e0c490" stroke-width=".4" opacity=".5"/><path d="M55.4 108.6 l3.0 -8.3" stroke="#e0c490" stroke-width=".4" opacity=".5"/><path d="M55.1 111.4 l-3.0 -8.6" stroke="#e0c490" stroke-width=".4" opacity=".5"/><path d="M55.1 111.4 l2.4 -8.4" stroke="#e0c490" stroke-width=".4" opacity=".5"/><path d="M93.3 125.2 L90.6 146.2" stroke="#d8b880" stroke-width="2.6" stroke-linecap="round" opacity=".5"/><path d="M93.3 125.2 l-3.8 -10.8" stroke="#e0c490" stroke-width=".4" opacity=".5"/><path d="M93.3 125.2 l3.4 -11.9" stroke="#e0c490" stroke-width=".4" opacity=".5"/><path d="M92.8 128.7 l-2.3 -10.7" stroke="#e0c490" stroke-width=".4" opacity=".5"/><path d="M92.8 128.7 l3.8 -6.7" stroke="#e0c490" stroke-width=".4" opacity=".5"/><path d="M92.4 132.2 l-3.2 -11.7" stroke="#e0c490" stroke-width=".4" opacity=".5"/><path d="M92.4 132.2 l2.6 -11.1" stroke="#e0c490" stroke-width=".4" opacity=".5"/><path d="M91.9 135.7 l-3.8 -8.6" stroke="#e0c490" stroke-width=".4" opacity=".5"/><path d="M91.9 135.7 l2.3 -7.3" stroke="#e0c490" stroke-width=".4" opacity=".5"/><path d="M91.5 139.2 l-3.7 -8.5" stroke="#e0c490" stroke-width=".4" opacity=".5"/><path d="M91.5 139.2 l2.6 -8.7" stroke="#e0c490" stroke-width=".4" opacity=".5"/><path d="M91.0 142.7 l-3.9 -7.5" stroke="#e0c490" stroke-width=".4" opacity=".5"/><path d="M91.0 142.7 l2.0 -11.7" stroke="#e0c490" stroke-width=".4" opacity=".5"/><path d="M71.2 108.0 L69.2 129.7" stroke="#d8b880" stroke-width="2.6" stroke-linecap="round" opacity=".5"/><path d="M71.2 108.0 l-2.2 -11.3" stroke="#e0c490" stroke-width=".4" opacity=".5"/><path d="M71.2 108.0 l2.5 -7.3" stroke="#e0c490" stroke-width=".4" opacity=".5"/><path d="M70.9 111.7 l-3.9 -7.4" stroke="#e0c490" stroke-width=".4" opacity=".5"/><path d="M70.9 111.7 l3.8 -8.0" stroke="#e0c490" stroke-width=".4" opacity=".5"/><path d="M70.6 115.3 l-2.6 -7.3" stroke="#e0c490" stroke-width=".4" opacity=".5"/><path d="M70.6 115.3 l3.1 -9.4" stroke="#e0c490" stroke-width=".4" opacity=".5"/><path d="M70.2 118.9 l-2.8 -9.0" stroke="#e0c490" stroke-width=".4" opacity=".5"/><path d="M70.2 118.9 l2.6 -11.0" stroke="#e0c490" stroke-width=".4" opacity=".5"/><path d="M69.9 122.5 l-3.9 -10.5" stroke="#e0c490" stroke-width=".4" opacity=".5"/><path d="M69.9 122.5 l3.6 -6.4" stroke="#e0c490" stroke-width=".4" opacity=".5"/><path d="M69.6 126.1 l-2.5 -7.2" stroke="#e0c490" stroke-width=".4" opacity=".5"/><path d="M69.6 126.1 l2.3 -11.8" stroke="#e0c490" stroke-width=".4" opacity=".5"/><path d="M110.7 135.5 L107.8 152.9" stroke="#d8b880" stroke-width="2.6" stroke-linecap="round" opacity=".5"/><path d="M110.7 135.5 l-2.9 -6.3" stroke="#e0c490" stroke-width=".4" opacity=".5"/><path d="M110.7 135.5 l3.8 -7.6" stroke="#e0c490" stroke-width=".4" opacity=".5"/><path d="M110.2 138.4 l-2.6 -11.7" stroke="#e0c490" stroke-width=".4" opacity=".5"/><path d="M110.2 138.4 l2.4 -11.5" stroke="#e0c490" stroke-width=".4" opacity=".5"/><path d="M109.7 141.3 l-2.6 -10.0" stroke="#e0c490" stroke-width=".4" opacity=".5"/><path d="M109.7 141.3 l2.2 -11.4" stroke="#e0c490" stroke-width=".4" opacity=".5"/><path d="M109.2 144.2 l-2.8 -8.1" stroke="#e0c490" stroke-width=".4" opacity=".5"/><path d="M109.2 144.2 l3.3 -9.6" stroke="#e0c490" stroke-width=".4" opacity=".5"/><path d="M108.8 147.1 l-2.5 -6.7" stroke="#e0c490" stroke-width=".4" opacity=".5"/><path d="M108.8 147.1 l3.2 -6.1" stroke="#e0c490" stroke-width=".4" opacity=".5"/><path d="M108.3 150.0 l-3.7 -8.1" stroke="#e0c490" stroke-width=".4" opacity=".5"/><path d="M108.3 150.0 l2.3 -8.0" stroke="#e0c490" stroke-width=".4" opacity=".5"/><path d="M57.6 104.5 L56.9 121.9" stroke="#d8b880" stroke-width="2.6" stroke-linecap="round" opacity=".5"/><path d="M57.6 104.5 l-2.7 -7.7" stroke="#e0c490" stroke-width=".4" opacity=".5"/><path d="M57.6 104.5 l3.0 -10.7" stroke="#e0c490" stroke-width=".4" opacity=".5"/><path d="M57.5 107.4 l-2.9 -10.6" stroke="#e0c490" stroke-width=".4" opacity=".5"/><path d="M57.5 107.4 l3.0 -6.7" stroke="#e0c490" stroke-width=".4" opacity=".5"/><path d="M57.4 110.3 l-2.3 -11.1" stroke="#e0c490" stroke-width=".4" opacity=".5"/><path d="M57.4 110.3 l3.0 -8.3" stroke="#e0c490" stroke-width=".4" opacity=".5"/><path d="M57.3 113.2 l-3.0 -11.1" stroke="#e0c490" stroke-width=".4" opacity=".5"/><path d="M57.3 113.2 l2.8 -8.2" stroke="#e0c490" stroke-width=".4" opacity=".5"/><path d="M57.2 116.1 l-2.7 -6.1" stroke="#e0c490" stroke-width=".4" opacity=".5"/><path d="M57.2 116.1 l3.1 -8.9" stroke="#e0c490" stroke-width=".4" opacity=".5"/><path d="M57.1 119.0 l-3.0 -8.7" stroke="#e0c490" stroke-width=".4" opacity=".5"/><path d="M57.1 119.0 l2.9 -10.3" stroke="#e0c490" stroke-width=".4" opacity=".5"/><path d="M62.5 139.0 L64.5 152.0" stroke="#d8b880" stroke-width="2.6" stroke-linecap="round" opacity=".5"/><path d="M62.5 139.0 l-2.4 -10.8" stroke="#e0c490" stroke-width=".4" opacity=".5"/><path d="M62.5 139.0 l2.5 -6.5" stroke="#e0c490" stroke-width=".4" opacity=".5"/><path d="M62.8 141.2 l-3.1 -11.0" stroke="#e0c490" stroke-width=".4" opacity=".5"/><path d="M62.8 141.2 l3.7 -11.3" stroke="#e0c490" stroke-width=".4" opacity=".5"/><path d="M63.1 143.4 l-4.0 -6.3" stroke="#e0c490" stroke-width=".4" opacity=".5"/><path d="M63.1 143.4 l2.8 -6.6" stroke="#e0c490" stroke-width=".4" opacity=".5"/><path d="M63.5 145.5 l-3.5 -8.7" stroke="#e0c490" stroke-width=".4" opacity=".5"/><path d="M63.5 145.5 l3.5 -10.8" stroke="#e0c490" stroke-width=".4" opacity=".5"/><path d="M63.8 147.7 l-4.0 -10.1" stroke="#e0c490" stroke-width=".4" opacity=".5"/><path d="M63.8 147.7 l3.8 -9.3" stroke="#e0c490" stroke-width=".4" opacity=".5"/><path d="M64.1 149.9 l-2.2 -11.3" stroke="#e0c490" stroke-width=".4" opacity=".5"/><path d="M64.1 149.9 l2.2 -6.5" stroke="#e0c490" stroke-width=".4" opacity=".5"/><path d="M105.6 102.6 L102.0 120.9" stroke="#d8b880" stroke-width="2.6" stroke-linecap="round" opacity=".5"/><path d="M105.6 102.6 l-2.4 -10.3" stroke="#e0c490" stroke-width=".4" opacity=".5"/><path d="M105.6 102.6 l2.1 -9.1" stroke="#e0c490" stroke-width=".4" opacity=".5"/><path d="M105.0 105.6 l-3.9 -7.3" stroke="#e0c490" stroke-width=".4" opacity=".5"/><path d="M105.0 105.6 l3.4 -10.5" stroke="#e0c490" stroke-width=".4" opacity=".5"/><path d="M104.4 108.7 l-3.2 -10.6" stroke="#e0c490" stroke-width=".4" opacity=".5"/><path d="M104.4 108.7 l3.4 -6.1" stroke="#e0c490" stroke-width=".4" opacity=".5"/><path d="M103.8 111.7 l-2.4 -9.2" stroke="#e0c490" stroke-width=".4" opacity=".5"/><path d="M103.8 111.7 l3.9 -7.3" stroke="#e0c490" stroke-width=".4" opacity=".5"/><path d="M103.2 114.8 l-3.2 -6.8" stroke="#e0c490" stroke-width=".4" opacity=".5"/><path d="M103.2 114.8 l3.7 -8.7" stroke="#e0c490" stroke-width=".4" opacity=".5"/><path d="M102.6 117.8 l-3.0 -10.0" stroke="#e0c490" stroke-width=".4" opacity=".5"/><path d="M102.6 117.8 l2.3 -10.4" stroke="#e0c490" stroke-width=".4" opacity=".5"/><path d="M103.6 132.7 L101.9 147.4" stroke="#d8b880" stroke-width="2.6" stroke-linecap="round" opacity=".5"/><path d="M103.6 132.7 l-2.3 -11.4" stroke="#e0c490" stroke-width=".4" opacity=".5"/><path d="M103.6 132.7 l2.9 -8.3" stroke="#e0c490" stroke-width=".4" opacity=".5"/><path d="M103.3 135.2 l-3.0 -10.2" stroke="#e0c490" stroke-width=".4" opacity=".5"/><path d="M103.3 135.2 l2.6 -8.0" stroke="#e0c490" stroke-width=".4" opacity=".5"/><path d="M103.0 137.6 l-3.5 -10.7" stroke="#e0c490" stroke-width=".4" opacity=".5"/><path d="M103.0 137.6 l2.6 -6.4" stroke="#e0c490" stroke-width=".4" opacity=".5"/><path d="M102.8 140.1 l-3.9 -10.4" stroke="#e0c490" stroke-width=".4" opacity=".5"/><path d="M102.8 140.1 l3.2 -8.4" stroke="#e0c490" stroke-width=".4" opacity=".5"/><path d="M102.5 142.5 l-3.9 -8.6" stroke="#e0c490" stroke-width=".4" opacity=".5"/><path d="M102.5 142.5 l2.4 -6.6" stroke="#e0c490" stroke-width=".4" opacity=".5"/><path d="M102.2 145.0 l-2.7 -9.6" stroke="#e0c490" stroke-width=".4" opacity=".5"/><path d="M102.2 145.0 l2.7 -11.7" stroke="#e0c490" stroke-width=".4" opacity=".5"/><path d="M93.5 111.8 L94.3 130.4" stroke="#d8b880" stroke-width="2.6" stroke-linecap="round" opacity=".5"/><path d="M93.5 111.8 l-3.2 -9.0" stroke="#e0c490" stroke-width=".4" opacity=".5"/><path d="M93.5 111.8 l3.0 -8.9" stroke="#e0c490" stroke-width=".4" opacity=".5"/><path d="M93.7 114.9 l-3.7 -7.2" stroke="#e0c490" stroke-width=".4" opacity=".5"/><path d="M93.7 114.9 l3.6 -7.8" stroke="#e0c490" stroke-width=".4" opacity=".5"/><path d="M93.8 118.0 l-3.7 -6.4" stroke="#e0c490" stroke-width=".4" opacity=".5"/><path d="M93.8 118.0 l3.0 -8.7" stroke="#e0c490" stroke-width=".4" opacity=".5"/><path d="M93.9 121.1 l-3.4 -7.2" stroke="#e0c490" stroke-width=".4" opacity=".5"/><path d="M93.9 121.1 l2.5 -6.8" stroke="#e0c490" stroke-width=".4" opacity=".5"/><path d="M94.1 124.2 l-3.1 -9.5" stroke="#e0c490" stroke-width=".4" opacity=".5"/><path d="M94.1 124.2 l2.0 -7.1" stroke="#e0c490" stroke-width=".4" opacity=".5"/><path d="M94.2 127.3 l-2.4 -11.7" stroke="#e0c490" stroke-width=".4" opacity=".5"/><path d="M94.2 127.3 l2.9 -9.4" stroke="#e0c490" stroke-width=".4" opacity=".5"/><path d="M69.4 122.3 L70.8 142.4" stroke="#d8b880" stroke-width="2.6" stroke-linecap="round" opacity=".5"/><path d="M69.4 122.3 l-2.0 -8.6" stroke="#e0c490" stroke-width=".4" opacity=".5"/><path d="M69.4 122.3 l3.0 -6.3" stroke="#e0c490" stroke-width=".4" opacity=".5"/><path d="M69.6 125.7 l-3.6 -7.9" stroke="#e0c490" stroke-width=".4" opacity=".5"/><path d="M69.6 125.7 l2.6 -9.8" stroke="#e0c490" stroke-width=".4" opacity=".5"/><path d="M69.9 129.0 l-3.2 -9.0" stroke="#e0c490" stroke-width=".4" opacity=".5"/><path d="M69.9 129.0 l3.7 -9.1" stroke="#e0c490" stroke-width=".4" opacity=".5"/><path d="M70.1 132.3 l-2.7 -6.4" stroke="#e0c490" stroke-width=".4" opacity=".5"/><path d="M70.1 132.3 l3.1 -8.2" stroke="#e0c490" stroke-width=".4" opacity=".5"/><path d="M70.4 135.7 l-3.1 -8.1" stroke="#e0c490" stroke-width=".4" opacity=".5"/><path d="M70.4 135.7 l2.0 -6.2" stroke="#e0c490" stroke-width=".4" opacity=".5"/><path d="M70.6 139.0 l-2.3 -6.6" stroke="#e0c490" stroke-width=".4" opacity=".5"/><path d="M70.6 139.0 l3.7 -9.5" stroke="#e0c490" stroke-width=".4" opacity=".5"/><path d="M66.0 125.0 L62.6 143.0" stroke="#d8b880" stroke-width="2.6" stroke-linecap="round" opacity=".5"/><path d="M66.0 125.0 l-3.5 -7.4" stroke="#e0c490" stroke-width=".4" opacity=".5"/><path d="M66.0 125.0 l4.0 -6.9" stroke="#e0c490" stroke-width=".4" opacity=".5"/><path d="M65.4 128.0 l-2.6 -7.5" stroke="#e0c490" stroke-width=".4" opacity=".5"/><path d="M65.4 128.0 l3.7 -10.9" stroke="#e0c490" stroke-width=".4" opacity=".5"/><path d="M64.9 131.0 l-3.2 -6.9" stroke="#e0c490" stroke-width=".4" opacity=".5"/><path d="M64.9 131.0 l2.9 -10.2" stroke="#e0c490" stroke-width=".4" opacity=".5"/><path d="M64.3 134.0 l-2.1 -11.5" stroke="#e0c490" stroke-width=".4" opacity=".5"/><path d="M64.3 134.0 l3.7 -11.6" stroke="#e0c490" stroke-width=".4" opacity=".5"/><path d="M63.7 137.0 l-3.4 -9.7" stroke="#e0c490" stroke-width=".4" opacity=".5"/><path d="M63.7 137.0 l4.0 -7.6" stroke="#e0c490" stroke-width=".4" opacity=".5"/><path d="M63.2 140.0 l-2.6 -6.7" stroke="#e0c490" stroke-width=".4" opacity=".5"/><path d="M63.2 140.0 l2.4 -10.8" stroke="#e0c490" stroke-width=".4" opacity=".5"/><path d="M56.4 126.7 L58.9 142.5" stroke="#d8b880" stroke-width="2.6" stroke-linecap="round" opacity=".5"/><path d="M56.4 126.7 l-3.5 -10.1" stroke="#e0c490" stroke-width=".4" opacity=".5"/><path d="M56.4 126.7 l3.7 -6.3" stroke="#e0c490" stroke-width=".4" opacity=".5"/><path d="M56.8 129.3 l-2.5 -8.2" stroke="#e0c490" stroke-width=".4" opacity=".5"/><path d="M56.8 129.3 l2.9 -10.0" stroke="#e0c490" stroke-width=".4" opacity=".5"/><path d="M57.2 131.9 l-3.8 -10.4" stroke="#e0c490" stroke-width=".4" opacity=".5"/><path d="M57.2 131.9 l3.9 -10.2" stroke="#e0c490" stroke-width=".4" opacity=".5"/><path d="M57.6 134.6 l-2.7 -9.0" stroke="#e0c490" stroke-width=".4" opacity=".5"/><path d="M57.6 134.6 l3.5 -10.9" stroke="#e0c490" stroke-width=".4" opacity=".5"/><path d="M58.1 137.2 l-2.7 -8.1" stroke="#e0c490" stroke-width=".4" opacity=".5"/><path d="M58.1 137.2 l3.2 -7.4" stroke="#e0c490" stroke-width=".4" opacity=".5"/><path d="M58.5 139.8 l-3.8 -6.0" stroke="#e0c490" stroke-width=".4" opacity=".5"/><path d="M58.5 139.8 l3.3 -8.9" stroke="#e0c490" stroke-width=".4" opacity=".5"/><path d="M26.9 97.3 L5.8 80.3" stroke="#dcbc88" stroke-width="0.93" opacity=".6"/><path d="M25.2 95.2 L6.1 66.1" stroke="#dcbc88" stroke-width="0.86" opacity=".6"/><path d="M38.0 110.7 L27.0 98.7" stroke="#d4b47c" stroke-width="0.92" opacity=".6"/><path d="M53.1 129.0 L41.0 112.0" stroke="#c8a46c" stroke-width="0.58" opacity=".6"/><path d="M66.6 145.5 L41.9 128.8" stroke="#dcbc88" stroke-width="0.49" opacity=".6"/><path d="M35.3 107.4 L29.9 96.3" stroke="#c8a46c" stroke-width="0.93" opacity=".6"/><path d="M58.5 135.6 L41.8 127.9" stroke="#dcbc88" stroke-width="0.79" opacity=".6"/><path d="M28.0 98.5 L4.2 77.7" stroke="#c8a46c" stroke-width="0.92" opacity=".6"/><path d="M30.8 101.9 L22.1 86.8" stroke="#e2c894" stroke-width="0.99" opacity=".6"/><path d="M22.2 91.6 L9.6 67.5" stroke="#dcbc88" stroke-width="0.91" opacity=".6"/><path d="M17.8 86.1 L-5.6 61.8" stroke="#c8a46c" stroke-width="0.59" opacity=".6"/><path d="M36.0 108.3 L5.9 96.4" stroke="#d4b47c" stroke-width="0.88" opacity=".6"/><path d="M42.5 116.2 L15.5 97.8" stroke="#d4b47c" stroke-width="0.50" opacity=".6"/><path d="M64.0 142.3 L44.2 116.0" stroke="#e2c894" stroke-width="0.52" opacity=".6"/><path d="M35.9 108.1 L9.7 78.4" stroke="#e2c894" stroke-width="0.74" opacity=".6"/><path d="M40.2 113.4 L29.1 105.8" stroke="#dcbc88" stroke-width="0.89" opacity=".6"/><path d="M35.9 108.2 L5.7 87.0" stroke="#e2c894" stroke-width="0.68" opacity=".6"/><path d="M26.9 97.2 L2.5 78.9" stroke="#e2c894" stroke-width="0.56" opacity=".6"/><path d="M19.8 88.6 L7.2 77.2" stroke="#c8a46c" stroke-width="0.85" opacity=".6"/><path d="M62.2 140.1 L43.3 120.3" stroke="#c8a46c" stroke-width="0.92" opacity=".6"/><path d="M18.7 87.3 L9.9 78.9" stroke="#d4b47c" stroke-width="0.52" opacity=".6"/><path d="M28.6 99.3 L-2.0 85.0" stroke="#d4b47c" stroke-width="0.72" opacity=".6"/><path d="M20.8 89.9 L4.1 75.8" stroke="#e2c894" stroke-width="0.94" opacity=".6"/><path d="M61.9 139.7 L52.4 126.6" stroke="#dcbc88" stroke-width="0.87" opacity=".6"/><path d="M22.1 91.4 L10.1 87.4" stroke="#c8a46c" stroke-width="0.80" opacity=".6"/><path d="M63.5 141.7 L49.3 135.3" stroke="#c8a46c" stroke-width="0.44" opacity=".6"/><path d="M43.2 117.1 L15.6 105.9" stroke="#d4b47c" stroke-width="0.79" opacity=".6"/><path d="M31.6 102.9 L-3.3 91.6" stroke="#d4b47c" stroke-width="0.77" opacity=".6"/><path d="M62.0 139.9 L42.5 133.4" stroke="#d4b47c" stroke-width="0.50" opacity=".6"/><path d="M50.8 126.2 L36.8 107.3" stroke="#d4b47c" stroke-width="0.93" opacity=".6"/><path d="M63.9 142.2 L38.2 118.4" stroke="#c8a46c" stroke-width="0.82" opacity=".6"/><path d="M47.2 121.9 L25.3 115.5" stroke="#e2c894" stroke-width="0.66" opacity=".6"/><path d="M44.1 118.1 L30.2 108.3" stroke="#d4b47c" stroke-width="0.54" opacity=".6"/><path d="M65.6 144.3 L31.5 125.8" stroke="#d4b47c" stroke-width="0.68" opacity=".6"/><path d="M64.4 142.8 L48.4 109.7" stroke="#e2c894" stroke-width="0.76" opacity=".6"/><path d="M22.4 91.7 L8.6 81.7" stroke="#d4b47c" stroke-width="0.45" opacity=".6"/><path d="M68.0 147.1 L63.1 137.4" stroke="#d4b47c" stroke-width="0.59" opacity=".6"/><path d="M50.0 125.3 L18.3 105.8" stroke="#dcbc88" stroke-width="0.58" opacity=".6"/><path d="M62.6 140.6 L55.8 129.2" stroke="#e2c894" stroke-width="0.41" opacity=".6"/><path d="M36.1 108.4 L26.0 103.9" stroke="#e2c894" stroke-width="0.42" opacity=".6"/><path d="M31.8 103.1 L18.2 74.9" stroke="#e2c894" stroke-width="0.91" opacity=".6"/><path d="M62.0 139.9 L36.0 122.2" stroke="#c8a46c" stroke-width="0.61" opacity=".6"/><path d="M63.3 141.4 L49.4 126.2" stroke="#e2c894" stroke-width="0.59" opacity=".6"/><path d="M48.4 123.4 L30.2 104.3" stroke="#d4b47c" stroke-width="0.63" opacity=".6"/><path d="M20.6 89.6 L-0.6 72.1" stroke="#e2c894" stroke-width="0.63" opacity=".6"/><path d="M69.9 149.4 L56.6 124.2" stroke="#c8a46c" stroke-width="0.81" opacity=".6"/><path d="M26.9 97.3 L8.6 79.5" stroke="#dcbc88" stroke-width="0.97" opacity=".6"/><path d="M51.5 127.1 L39.4 112.8" stroke="#d4b47c" stroke-width="0.49" opacity=".6"/><path d="M54.3 130.6 L32.6 110.1" stroke="#d4b47c" stroke-width="0.50" opacity=".6"/><path d="M70.6 150.3 L57.1 134.1" stroke="#dcbc88" stroke-width="0.85" opacity=".6"/><path d="M44.7 118.9 L29.2 107.9" stroke="#dcbc88" stroke-width="0.87" opacity=".6"/><path d="M33.0 104.6 L10.9 82.4" stroke="#c8a46c" stroke-width="0.93" opacity=".6"/><path d="M20.5 89.4 L-6.9 61.6" stroke="#c8a46c" stroke-width="0.82" opacity=".6"/><path d="M32.6 104.2 L1.0 79.8" stroke="#dcbc88" stroke-width="0.50" opacity=".6"/><path d="M22.1 91.4 L5.6 77.7" stroke="#dcbc88" stroke-width="0.58" opacity=".6"/><path d="M57.3 134.1 L33.3 120.6" stroke="#c8a46c" stroke-width="0.44" opacity=".6"/><path d="M49.2 124.3 L34.2 119.7" stroke="#dcbc88" stroke-width="0.65" opacity=".6"/><path d="M37.8 110.4 L19.7 81.5" stroke="#dcbc88" stroke-width="0.87" opacity=".6"/><path d="M24.6 94.5 L20.0 85.4" stroke="#dcbc88" stroke-width="0.67" opacity=".6"/><path d="M29.7 100.6 L6.7 74.1" stroke="#c8a46c" stroke-width="0.47" opacity=".6"/><path d="M47.9 122.8 L29.6 90.3" stroke="#c8a46c" stroke-width="0.78" opacity=".6"/><path d="M33.3 105.1 L13.6 83.5" stroke="#c8a46c" stroke-width="0.69" opacity=".6"/><path d="M58.1 135.1 L47.9 122.6" stroke="#e2c894" stroke-width="0.93" opacity=".6"/><path d="M68.8 148.1 L59.7 143.3" stroke="#c8a46c" stroke-width="0.75" opacity=".6"/><path d="M19.9 88.7 L-8.0 81.1" stroke="#e2c894" stroke-width="0.58" opacity=".6"/><path d="M16 84 Q44 110 72 152" stroke="#d4b47c" stroke-width="5" fill="none" opacity=".45"/><path d="M35.6 168.8 L16.5 130.6" stroke="#d4b47c" stroke-width="0.66" opacity=".6"/><path d="M44.4 167.7 L22.9 159.0" stroke="#e2c894" stroke-width="0.55" opacity=".6"/><path d="M40.6 168.9 L10.4 159.3" stroke="#e2c894" stroke-width="0.60" opacity=".6"/><path d="M36.9 167.2 L1.7 148.1" stroke="#c8a46c" stroke-width="0.50" opacity=".6"/><path d="M40.7 172.3 L26.0 143.7" stroke="#d4b47c" stroke-width="0.67" opacity=".6"/><path d="M36.7 172.1 L18.2 161.4" stroke="#d4b47c" stroke-width="0.68" opacity=".6"/><path d="M37.5 166.7 L9.6 159.8" stroke="#e2c894" stroke-width="0.51" opacity=".6"/><path d="M40.8 167.8 L12.2 133.8" stroke="#d4b47c" stroke-width="0.50" opacity=".6"/><path d="M43.4 169.7 L21.3 133.5" stroke="#d4b47c" stroke-width="0.52" opacity=".6"/><path d="M45.1 167.7 L18.8 151.5" stroke="#d4b47c" stroke-width="0.64" opacity=".6"/><path d="M45.2 166.3 L-1.7 171.0" stroke="#dcbc88" stroke-width="1.00" opacity=".6"/><path d="M38.0 170.0 L8.4 156.6" stroke="#e2c894" stroke-width="0.92" opacity=".6"/><path d="M42.2 170.1 L23.2 152.3" stroke="#dcbc88" stroke-width="0.54" opacity=".6"/><path d="M42.3 172.8 L5.0 151.5" stroke="#e2c894" stroke-width="0.69" opacity=".6"/><path d="M36.2 170.6 L7.2 166.7" stroke="#e2c894" stroke-width="0.60" opacity=".6"/><path d="M44.9 168.1 L24.4 148.0" stroke="#c8a46c" stroke-width="0.51" opacity=".6"/><path d="M35.8 169.7 L20.6 159.4" stroke="#c8a46c" stroke-width="0.76" opacity=".6"/><path d="M44.5 169.0 L6.9 148.9" stroke="#e2c894" stroke-width="0.87" opacity=".6"/><path d="M35.5 170.0 L-6.1 159.0" stroke="#e2c894" stroke-width="0.91" opacity=".6"/><path d="M37.1 168.2 L12.3 152.2" stroke="#d4b47c" stroke-width="0.57" opacity=".6"/><path d="M34.2 170.6 L27.4 153.1" stroke="#e2c894" stroke-width="0.87" opacity=".6"/><path d="M35.9 169.5 L20.3 134.4" stroke="#d4b47c" stroke-width="0.56" opacity=".6"/><path d="M34.7 167.7 L9.6 144.8" stroke="#dcbc88" stroke-width="0.90" opacity=".6"/><path d="M45.4 167.1 L18.3 154.3" stroke="#c8a46c" stroke-width="0.41" opacity=".6"/><path d="M43.5 170.3 L24.3 152.1" stroke="#e2c894" stroke-width="0.65" opacity=".6"/><path d="M45.6 171.4 L-1.7 148.3" stroke="#d4b47c" stroke-width="0.46" opacity=".6"/><path d="M40.2 166.2 L15.4 141.3" stroke="#d4b47c" stroke-width="0.74" opacity=".6"/><path d="M41.2 170.5 L17.7 141.0" stroke="#e2c894" stroke-width="0.85" opacity=".6"/><path d="M36.0 168.4 L6.9 149.8" stroke="#e2c894" stroke-width="0.61" opacity=".6"/><path d="M39.3 168.6 L8.9 170.2" stroke="#e2c894" stroke-width="0.42" opacity=".6"/><path d="M45.3 166.7 L21.7 156.7" stroke="#dcbc88" stroke-width="0.90" opacity=".6"/><path d="M37.4 166.4 L21.9 159.9" stroke="#dcbc88" stroke-width="0.57" opacity=".6"/><path d="M38.1 172.1 L-6.6 159.4" stroke="#dcbc88" stroke-width="0.52" opacity=".6"/><path d="M34.3 169.4 L5.7 155.4" stroke="#dcbc88" stroke-width="0.57" opacity=".6"/><path d="M42.4 168.6 L8.0 146.0" stroke="#c8a46c" stroke-width="0.67" opacity=".6"/><path d="M40.2 169.5 L25.2 156.5" stroke="#d4b47c" stroke-width="0.75" opacity=".6"/><path d="M34.8 173.0 L12.9 166.0" stroke="#dcbc88" stroke-width="0.56" opacity=".6"/><path d="M34.1 166.1 L20.8 134.8" stroke="#dcbc88" stroke-width="0.45" opacity=".6"/><path d="M45.7 172.6 L18.3 152.9" stroke="#d4b47c" stroke-width="0.75" opacity=".6"/><path d="M36.1 166.9 L-2.5 165.4" stroke="#d4b47c" stroke-width="0.73" opacity=".6"/><path d="M44.3 172.0 L12.2 143.9" stroke="#c8a46c" stroke-width="0.94" opacity=".6"/><path d="M37.7 170.5 L19.7 150.7" stroke="#c8a46c" stroke-width="0.81" opacity=".6"/><path d="M36.3 171.7 L7.4 148.2" stroke="#d4b47c" stroke-width="0.57" opacity=".6"/><path d="M42.8 168.9 L15.5 130.6" stroke="#c8a46c" stroke-width="0.68" opacity=".6"/><path d="M44.5 169.0 L25.1 154.5" stroke="#dcbc88" stroke-width="0.67" opacity=".6"/><path d="M38.3 172.5 L20.2 141.7" stroke="#c8a46c" stroke-width="0.42" opacity=".6"/><path d="M35.4 166.6 L-1.4 158.9" stroke="#c8a46c" stroke-width="0.62" opacity=".6"/><path d="M42.6 168.2 L10.1 150.1" stroke="#e2c894" stroke-width="0.92" opacity=".6"/><path d="M39.4 172.4 L5.3 162.8" stroke="#dcbc88" stroke-width="0.54" opacity=".6"/><path d="M38.3 171.7 L21.2 145.7" stroke="#dcbc88" stroke-width="0.97" opacity=".6"/><path d="M45.2 172.7 L17.0 164.1" stroke="#d4b47c" stroke-width="1.00" opacity=".6"/><path d="M42.8 169.2 L0.5 168.3" stroke="#d4b47c" stroke-width="0.71" opacity=".6"/><path d="M41.8 170.9 L21.1 158.8" stroke="#c8a46c" stroke-width="0.54" opacity=".6"/><path d="M34.9 167.7 L1.2 147.3" stroke="#dcbc88" stroke-width="0.94" opacity=".6"/><path d="M38.6 172.6 L25.3 152.7" stroke="#e2c894" stroke-width="0.89" opacity=".6"/><ellipse cx="28" cy="166" rx="16" ry="4.5" transform="rotate(-8 28 166)" fill="#dcc89c" opacity=".4"/>  </g>
 </svg>
 <div class="a" style="left:202.5px;top:188.4px;font-family:'Liberation Serif',serif;font-size:13px;line-height:15px;color:#524d4b;white-space:nowrap">Виробництво та <span style="text-decoration:underline dotted #e09a9a;text-decoration-thickness:1px;text-underline-offset:1px">Експорт</span><br>продукції <span style="text-decoration:underline solid #b89a9a;text-decoration-thickness:.7px;text-underline-offset:1.2px">борошномельного</span><br>виробництва під час війни</div>
 <div class="a" style="left:202.5px;top:242px;font-family:'Liberation Serif',serif;font-size:5.6px;line-height:7.9px;color:#262422">
  <div style="white-space:nowrap;word-spacing:-0.68px">У час війни залишаються хліб і борошно — важливим. В останні</div>
  <div style="white-space:nowrap;word-spacing:-0.13px">роки виробництво борошна в Україні зазнало значних змін. Війна</div>
  <div style="white-space:nowrap;word-spacing:.1px">до виробництва спрямованих експорт пшеничного борошна і жита</div>
  <div style="white-space:nowrap;word-spacing:0.20px">із пшениці (купон пшениці і жита). Також це принципово і за</div>
  <div style="white-space:nowrap">часу напрямів <span style="text-decoration:underline dotted #e09a9a;text-decoration-thickness:1px">нафтобаз експортних</span></div>
 </div>
 <div class="a" style="left:214px;top:299.5px;font-size:7px;font-weight:bold;letter-spacing:-.45px;color:#2a2a2a;white-space:nowrap;line-height:9px">Анна <span style="text-decoration:underline dotted #e09a9a;text-decoration-thickness:1px">Віталіївна</span> Мельник, <span style="text-decoration:underline;text-decoration-thickness:.6px">Олена</span> <span style="text-decoration:underline dotted #e09a9a;text-decoration-thickness:1px">Супрун-Крестова</span></div>

 <!-- scrollbar -->
 <div class="a" style="left:384px;top:100px;width:11px;height:300px;background:#e9e9ec"></div>
 <div class="a" style="left:384px;top:100px;width:11px;height:10px;background:#fff;border-left:1px solid #e6e6e8"></div>
 <svg class="a" style="left:386px;top:103px" width="7" height="4"><path d="M0.5 3.5h6L3.5 0.5z" fill="#777"/></svg>
 <div class="a" style="left:384px;top:110px;width:11px;height:30px;background:#fdfdfd;border-top:1px solid #c8c8c8;border-left:1px solid #e6e6e8;border-bottom:1px solid #dcdcdc"></div>
 <div class="a" style="left:384px;top:356px;width:11px;height:9px;background:#fff"></div>
 <svg class="a" style="left:386px;top:359px" width="7" height="4"><path d="M0.5 0.5h6L3.5 3.5z" fill="#666"/></svg>
 <svg class="a" style="left:386px;top:367px" width="7" height="6"><path d="M0.5 3h6L3.5 0.5zM0.5 5.5h6L3.5 3z" fill="#777"/></svg>
 <svg class="a" style="left:386px;top:378px" width="7" height="6"><path d="M0.5 0.5h6L3.5 3zM0.5 3h6L3.5 5.5z" fill="#777"/></svg>

 <!-- status bar -->
 <div class="a" style="left:0;top:400px;width:395px;height:14px;background:#d6482a"></div>
 <div class="t7" style="left:3.5px;top:403px;font-size:6.6px;color:#fbe4dc;line-height:8px">СЛАЙД 1 ИЗ 8</div>
 <svg class="a" style="left:55px;top:402px" width="10" height="9" viewBox="0 0 10 9"><path d="M0.5 0.5h9v8h-9z" fill="none" stroke="#f4d0c4" stroke-width=".8"/><path d="M5 3l3 3M8 3l-3 3" stroke="#f4d0c4" stroke-width=".8"/></svg>
 <svg class="a" style="left:88px;top:402px" width="8" height="9" viewBox="0 0 8 9"><path d="M4 0.5l2 2H2z" fill="#f4d8cc"/><path d="M0 4.5h8M0 6.5h8" stroke="#f4d8cc" stroke-width=".8"/></svg>
 <div class="t7" style="left:98px;top:403px;font-size:6px;color:#fbe4dc;line-height:8px;letter-spacing:.1px">ЗАМЕТКИ</div>
 <svg class="a" style="left:135px;top:402px" width="9" height="9" viewBox="0 0 9 9"><path d="M0.5 0.5h8v5.5H4L2 8.5V6H0.5z" fill="#fff"/></svg>
 <div class="t7" style="left:146px;top:403px;font-size:6px;color:#fbe4dc;line-height:8px;letter-spacing:.1px">ПРИМЕЧАНИЯ</div>
 <div class="a" style="left:198px;top:400px;width:19px;height:14px;background:#b33c20"></div>
 <svg class="a" style="left:203px;top:402px" width="9" height="9" viewBox="0 0 9 9"><rect x=".5" y=".5" width="8" height="8" fill="none" stroke="#fce8e0" stroke-width="1"/><rect x="1" y="1" width="2" height="7" fill="#fce8e0"/><rect x="4" y="3" width="3" height="2" fill="#fce8e0"/></svg>
 <svg class="a" style="left:221px;top:402px" width="9" height="9" viewBox="0 0 9 9"><rect x="0.5" y="0.5" width="3.5" height="3.5" fill="#fce8e0"/><rect x="5" y="0.5" width="3.5" height="3.5" fill="#fce8e0"/><rect x="0.5" y="5" width="3.5" height="3.5" fill="#fce8e0"/><rect x="5" y="5" width="3.5" height="3.5" fill="#fce8e0"/></svg>
 <svg class="a" style="left:241px;top:402px" width="9" height="9" viewBox="0 0 9 9"><path d="M0.5 1.5h3.5v7H0.5zM5 1.5h3.5v7H5z" fill="none" stroke="#f0c8b8" stroke-width=".8"/><path d="M6 0v3" stroke="#f0c8b8"/></svg>
 <svg class="a" style="left:259px;top:402px" width="9" height="9" viewBox="0 0 9 9"><path d="M0.5 1h8M1.5 1v4h6V1M4.5 5v3M2.5 8.5h4" fill="none" stroke="#f4d8cc" stroke-width=".9"/></svg>
 <div class="a" style="left:275px;top:406px;width:5px;height:1px;background:#fce8e0"></div>
 <div class="a" style="left:281px;top:406.5px;width:64px;height:.7px;background:#e8a088"></div>
 <div class="a" style="left:289px;top:403px;width:3px;height:8px;background:#fff"></div>
 <div class="a" style="left:312px;top:405.5px;width:1px;height:2px;background:#f0c0b0"></div>
 <svg class="a" style="left:345px;top:403px" width="7" height="7"><path d="M3.5 0.5v6M0.5 3.5h6" stroke="#fce8e0" stroke-width="1.3"/></svg>
 <div class="t7" style="left:358px;top:403px;font-size:6.3px;color:#f4d8cc;line-height:8px">31%</div>
 <svg class="a" style="left:376.5px;top:402px" width="9" height="9" viewBox="0 0 9 9"><path d="M0.5 0.5v8h8M3 5.5h4.5v-4" fill="none" stroke="#f0c0b0" stroke-width=".8"/></svg>

</div>
</body></html>
